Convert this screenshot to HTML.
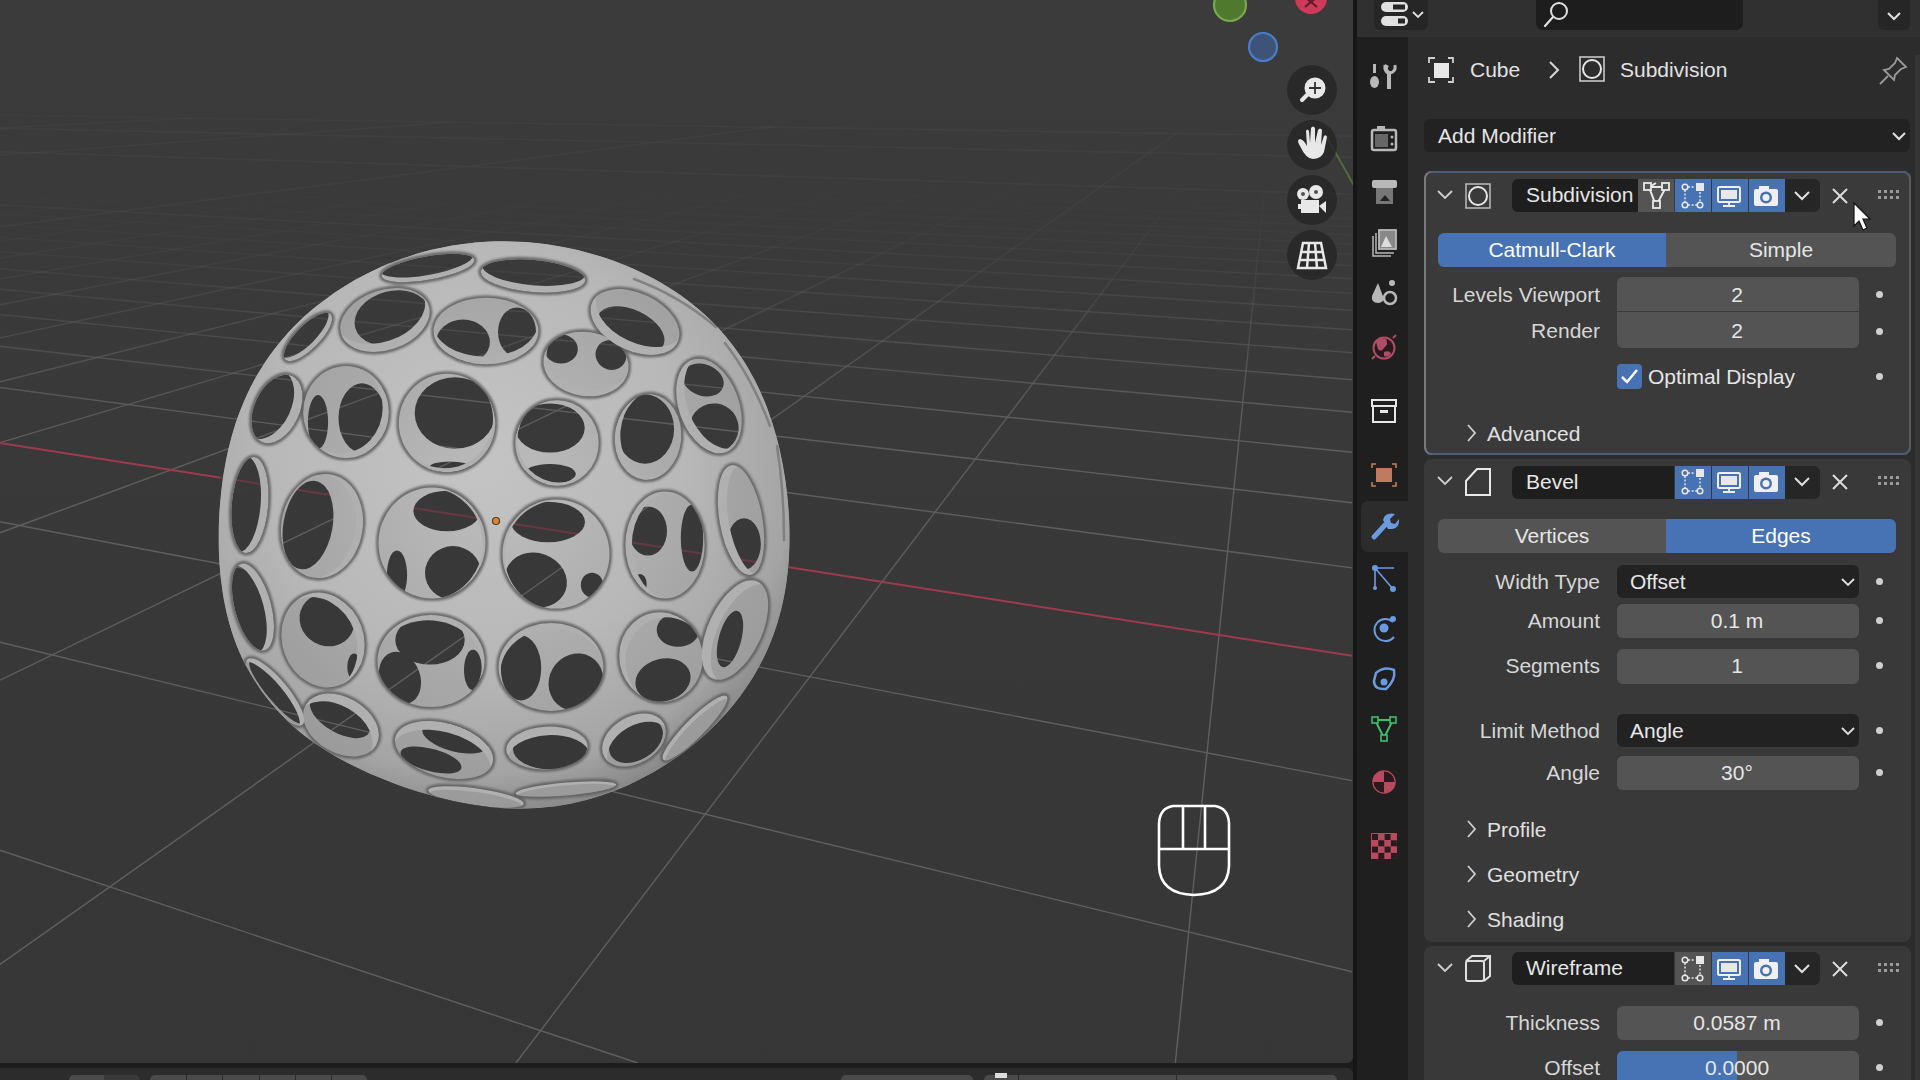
<!DOCTYPE html>
<html><head><meta charset="utf-8"><style>
html,body{margin:0;padding:0;width:1920px;height:1080px;overflow:hidden;background:#1d1d1d}
.t{position:absolute;font-family:"Liberation Sans",sans-serif;white-space:nowrap}
</style></head><body>
<div style="position:absolute;left:0px;top:0px;width:1353px;height:1063px;background:linear-gradient(#3b3b3b,#383838 60%,#363636);border-bottom-right-radius:6px;overflow:hidden"></div>
<svg width="1353" height="1063" viewBox="0 0 1353 1063" style="position:absolute;left:0;top:0">
<defs><linearGradient id="fade" x1="0" y1="0" x2="0" y2="1"><stop offset="0" stop-color="#000"/><stop offset="0.13" stop-color="#000"/><stop offset="0.3" stop-color="#333"/><stop offset="0.5" stop-color="#999"/><stop offset="0.8" stop-color="#fff"/></linearGradient>
<mask id="gfade" maskUnits="userSpaceOnUse" x="0" y="0" width="1353" height="1063"><rect width="1353" height="1063" fill="url(#fade)"/></mask></defs>
<defs><linearGradient id="g0" gradientUnits="userSpaceOnUse" x1="0.0" y1="115.1" x2="1352.0" y2="136.3"><stop offset="0" stop-color="#5e5e5e" stop-opacity="0.08"/><stop offset="0.03" stop-color="#5e5e5e" stop-opacity="0.08"/><stop offset="0.08" stop-color="#5e5e5e" stop-opacity="0.09"/><stop offset="0.15" stop-color="#5e5e5e" stop-opacity="0.10"/><stop offset="0.3" stop-color="#5e5e5e" stop-opacity="0.12"/><stop offset="0.5" stop-color="#5e5e5e" stop-opacity="0.14"/><stop offset="0.75" stop-color="#5e5e5e" stop-opacity="0.15"/><stop offset="1.0" stop-color="#5e5e5e" stop-opacity="0.15"/></linearGradient><linearGradient id="g1" gradientUnits="userSpaceOnUse" x1="0.0" y1="116.2" x2="1352.0" y2="138.0"><stop offset="0" stop-color="#5e5e5e" stop-opacity="0.00"/><stop offset="0.03" stop-color="#5e5e5e" stop-opacity="0.00"/><stop offset="0.08" stop-color="#5e5e5e" stop-opacity="0.00"/><stop offset="0.15" stop-color="#5e5e5e" stop-opacity="0.00"/><stop offset="0.3" stop-color="#5e5e5e" stop-opacity="0.00"/><stop offset="0.5" stop-color="#5e5e5e" stop-opacity="0.00"/><stop offset="0.75" stop-color="#5e5e5e" stop-opacity="0.00"/><stop offset="1.0" stop-color="#5e5e5e" stop-opacity="0.00"/></linearGradient><linearGradient id="g2" gradientUnits="userSpaceOnUse" x1="15.2" y1="115.3" x2="0.0" y2="115.9"><stop offset="0" stop-color="#5e5e5e" stop-opacity="0.00"/><stop offset="0.03" stop-color="#5e5e5e" stop-opacity="0.00"/><stop offset="0.08" stop-color="#5e5e5e" stop-opacity="0.00"/><stop offset="0.15" stop-color="#5e5e5e" stop-opacity="0.00"/><stop offset="0.3" stop-color="#5e5e5e" stop-opacity="0.00"/><stop offset="0.5" stop-color="#5e5e5e" stop-opacity="0.00"/><stop offset="0.75" stop-color="#5e5e5e" stop-opacity="0.00"/><stop offset="1.0" stop-color="#5e5e5e" stop-opacity="0.00"/></linearGradient><linearGradient id="g3" gradientUnits="userSpaceOnUse" x1="0.0" y1="117.2" x2="1352.0" y2="139.7"><stop offset="0" stop-color="#5e5e5e" stop-opacity="0.00"/><stop offset="0.03" stop-color="#5e5e5e" stop-opacity="0.00"/><stop offset="0.08" stop-color="#5e5e5e" stop-opacity="0.00"/><stop offset="0.15" stop-color="#5e5e5e" stop-opacity="0.00"/><stop offset="0.3" stop-color="#5e5e5e" stop-opacity="0.00"/><stop offset="0.5" stop-color="#5e5e5e" stop-opacity="0.00"/><stop offset="0.75" stop-color="#5e5e5e" stop-opacity="0.00"/><stop offset="1.0" stop-color="#5e5e5e" stop-opacity="0.00"/></linearGradient><linearGradient id="g4" gradientUnits="userSpaceOnUse" x1="35.8" y1="115.7" x2="0.0" y2="117.3"><stop offset="0" stop-color="#5e5e5e" stop-opacity="0.00"/><stop offset="0.03" stop-color="#5e5e5e" stop-opacity="0.00"/><stop offset="0.08" stop-color="#5e5e5e" stop-opacity="0.00"/><stop offset="0.15" stop-color="#5e5e5e" stop-opacity="0.00"/><stop offset="0.3" stop-color="#5e5e5e" stop-opacity="0.00"/><stop offset="0.5" stop-color="#5e5e5e" stop-opacity="0.00"/><stop offset="0.75" stop-color="#5e5e5e" stop-opacity="0.00"/><stop offset="1.0" stop-color="#5e5e5e" stop-opacity="0.00"/></linearGradient><linearGradient id="g5" gradientUnits="userSpaceOnUse" x1="0.0" y1="118.4" x2="1352.0" y2="141.5"><stop offset="0" stop-color="#5e5e5e" stop-opacity="0.00"/><stop offset="0.03" stop-color="#5e5e5e" stop-opacity="0.00"/><stop offset="0.08" stop-color="#5e5e5e" stop-opacity="0.00"/><stop offset="0.15" stop-color="#5e5e5e" stop-opacity="0.00"/><stop offset="0.3" stop-color="#5e5e5e" stop-opacity="0.00"/><stop offset="0.5" stop-color="#5e5e5e" stop-opacity="0.00"/><stop offset="0.75" stop-color="#5e5e5e" stop-opacity="0.00"/><stop offset="1.0" stop-color="#5e5e5e" stop-opacity="0.00"/></linearGradient><linearGradient id="g6" gradientUnits="userSpaceOnUse" x1="56.7" y1="116.0" x2="0.0" y2="118.5"><stop offset="0" stop-color="#5e5e5e" stop-opacity="0.00"/><stop offset="0.03" stop-color="#5e5e5e" stop-opacity="0.00"/><stop offset="0.08" stop-color="#5e5e5e" stop-opacity="0.00"/><stop offset="0.15" stop-color="#5e5e5e" stop-opacity="0.00"/><stop offset="0.3" stop-color="#5e5e5e" stop-opacity="0.00"/><stop offset="0.5" stop-color="#5e5e5e" stop-opacity="0.00"/><stop offset="0.75" stop-color="#5e5e5e" stop-opacity="0.00"/><stop offset="1.0" stop-color="#5e5e5e" stop-opacity="0.00"/></linearGradient><linearGradient id="g7" gradientUnits="userSpaceOnUse" x1="0.0" y1="119.6" x2="1352.0" y2="143.4"><stop offset="0" stop-color="#5e5e5e" stop-opacity="0.00"/><stop offset="0.03" stop-color="#5e5e5e" stop-opacity="0.00"/><stop offset="0.08" stop-color="#5e5e5e" stop-opacity="0.00"/><stop offset="0.15" stop-color="#5e5e5e" stop-opacity="0.00"/><stop offset="0.3" stop-color="#5e5e5e" stop-opacity="0.00"/><stop offset="0.5" stop-color="#5e5e5e" stop-opacity="0.00"/><stop offset="0.75" stop-color="#5e5e5e" stop-opacity="0.00"/><stop offset="1.0" stop-color="#5e5e5e" stop-opacity="0.00"/></linearGradient><linearGradient id="g8" gradientUnits="userSpaceOnUse" x1="78.0" y1="116.3" x2="0.0" y2="119.8"><stop offset="0" stop-color="#5e5e5e" stop-opacity="0.00"/><stop offset="0.03" stop-color="#5e5e5e" stop-opacity="0.00"/><stop offset="0.08" stop-color="#5e5e5e" stop-opacity="0.00"/><stop offset="0.15" stop-color="#5e5e5e" stop-opacity="0.00"/><stop offset="0.3" stop-color="#5e5e5e" stop-opacity="0.00"/><stop offset="0.5" stop-color="#5e5e5e" stop-opacity="0.00"/><stop offset="0.75" stop-color="#5e5e5e" stop-opacity="0.00"/><stop offset="1.0" stop-color="#5e5e5e" stop-opacity="0.00"/></linearGradient><linearGradient id="g9" gradientUnits="userSpaceOnUse" x1="0.0" y1="120.9" x2="1352.0" y2="145.5"><stop offset="0" stop-color="#5e5e5e" stop-opacity="0.00"/><stop offset="0.03" stop-color="#5e5e5e" stop-opacity="0.00"/><stop offset="0.08" stop-color="#5e5e5e" stop-opacity="0.00"/><stop offset="0.15" stop-color="#5e5e5e" stop-opacity="0.00"/><stop offset="0.3" stop-color="#5e5e5e" stop-opacity="0.00"/><stop offset="0.5" stop-color="#5e5e5e" stop-opacity="0.00"/><stop offset="0.75" stop-color="#5e5e5e" stop-opacity="0.00"/><stop offset="1.0" stop-color="#5e5e5e" stop-opacity="0.00"/></linearGradient><linearGradient id="g10" gradientUnits="userSpaceOnUse" x1="99.7" y1="116.7" x2="0.0" y2="121.3"><stop offset="0" stop-color="#5e5e5e" stop-opacity="0.00"/><stop offset="0.03" stop-color="#5e5e5e" stop-opacity="0.00"/><stop offset="0.08" stop-color="#5e5e5e" stop-opacity="0.00"/><stop offset="0.15" stop-color="#5e5e5e" stop-opacity="0.00"/><stop offset="0.3" stop-color="#5e5e5e" stop-opacity="0.00"/><stop offset="0.5" stop-color="#5e5e5e" stop-opacity="0.00"/><stop offset="0.75" stop-color="#5e5e5e" stop-opacity="0.00"/><stop offset="1.0" stop-color="#5e5e5e" stop-opacity="0.00"/></linearGradient><linearGradient id="g11" gradientUnits="userSpaceOnUse" x1="0.0" y1="122.2" x2="1352.0" y2="147.5"><stop offset="0" stop-color="#5e5e5e" stop-opacity="0.00"/><stop offset="0.03" stop-color="#5e5e5e" stop-opacity="0.00"/><stop offset="0.08" stop-color="#5e5e5e" stop-opacity="0.00"/><stop offset="0.15" stop-color="#5e5e5e" stop-opacity="0.00"/><stop offset="0.3" stop-color="#5e5e5e" stop-opacity="0.00"/><stop offset="0.5" stop-color="#5e5e5e" stop-opacity="0.00"/><stop offset="0.75" stop-color="#5e5e5e" stop-opacity="0.00"/><stop offset="1.0" stop-color="#5e5e5e" stop-opacity="0.00"/></linearGradient><linearGradient id="g12" gradientUnits="userSpaceOnUse" x1="121.8" y1="117.0" x2="0.0" y2="122.8"><stop offset="0" stop-color="#5e5e5e" stop-opacity="0.00"/><stop offset="0.03" stop-color="#5e5e5e" stop-opacity="0.00"/><stop offset="0.08" stop-color="#5e5e5e" stop-opacity="0.00"/><stop offset="0.15" stop-color="#5e5e5e" stop-opacity="0.00"/><stop offset="0.3" stop-color="#5e5e5e" stop-opacity="0.00"/><stop offset="0.5" stop-color="#5e5e5e" stop-opacity="0.00"/><stop offset="0.75" stop-color="#5e5e5e" stop-opacity="0.00"/><stop offset="1.0" stop-color="#5e5e5e" stop-opacity="0.00"/></linearGradient><linearGradient id="g13" gradientUnits="userSpaceOnUse" x1="0.0" y1="123.6" x2="1352.0" y2="149.8"><stop offset="0" stop-color="#5e5e5e" stop-opacity="0.00"/><stop offset="0.03" stop-color="#5e5e5e" stop-opacity="0.00"/><stop offset="0.08" stop-color="#5e5e5e" stop-opacity="0.00"/><stop offset="0.15" stop-color="#5e5e5e" stop-opacity="0.00"/><stop offset="0.3" stop-color="#5e5e5e" stop-opacity="0.00"/><stop offset="0.5" stop-color="#5e5e5e" stop-opacity="0.00"/><stop offset="0.75" stop-color="#5e5e5e" stop-opacity="0.00"/><stop offset="1.0" stop-color="#5e5e5e" stop-opacity="0.00"/></linearGradient><linearGradient id="g14" gradientUnits="userSpaceOnUse" x1="144.3" y1="117.4" x2="0.0" y2="124.5"><stop offset="0" stop-color="#5e5e5e" stop-opacity="0.00"/><stop offset="0.03" stop-color="#5e5e5e" stop-opacity="0.00"/><stop offset="0.08" stop-color="#5e5e5e" stop-opacity="0.00"/><stop offset="0.15" stop-color="#5e5e5e" stop-opacity="0.00"/><stop offset="0.3" stop-color="#5e5e5e" stop-opacity="0.00"/><stop offset="0.5" stop-color="#5e5e5e" stop-opacity="0.00"/><stop offset="0.75" stop-color="#5e5e5e" stop-opacity="0.00"/><stop offset="1.0" stop-color="#5e5e5e" stop-opacity="0.00"/></linearGradient><linearGradient id="g15" gradientUnits="userSpaceOnUse" x1="0.0" y1="125.1" x2="1352.0" y2="152.1"><stop offset="0" stop-color="#5e5e5e" stop-opacity="0.00"/><stop offset="0.03" stop-color="#5e5e5e" stop-opacity="0.00"/><stop offset="0.08" stop-color="#5e5e5e" stop-opacity="0.00"/><stop offset="0.15" stop-color="#5e5e5e" stop-opacity="0.00"/><stop offset="0.3" stop-color="#5e5e5e" stop-opacity="0.00"/><stop offset="0.5" stop-color="#5e5e5e" stop-opacity="0.00"/><stop offset="0.75" stop-color="#5e5e5e" stop-opacity="0.00"/><stop offset="1.0" stop-color="#5e5e5e" stop-opacity="0.00"/></linearGradient><linearGradient id="g16" gradientUnits="userSpaceOnUse" x1="167.2" y1="117.7" x2="0.0" y2="126.1"><stop offset="0" stop-color="#5e5e5e" stop-opacity="0.00"/><stop offset="0.03" stop-color="#5e5e5e" stop-opacity="0.00"/><stop offset="0.08" stop-color="#5e5e5e" stop-opacity="0.00"/><stop offset="0.15" stop-color="#5e5e5e" stop-opacity="0.00"/><stop offset="0.3" stop-color="#5e5e5e" stop-opacity="0.00"/><stop offset="0.5" stop-color="#5e5e5e" stop-opacity="0.00"/><stop offset="0.75" stop-color="#5e5e5e" stop-opacity="0.00"/><stop offset="1.0" stop-color="#5e5e5e" stop-opacity="0.00"/></linearGradient><linearGradient id="g17" gradientUnits="userSpaceOnUse" x1="0.0" y1="126.7" x2="1352.0" y2="154.6"><stop offset="0" stop-color="#5e5e5e" stop-opacity="0.00"/><stop offset="0.03" stop-color="#5e5e5e" stop-opacity="0.00"/><stop offset="0.08" stop-color="#5e5e5e" stop-opacity="0.00"/><stop offset="0.15" stop-color="#5e5e5e" stop-opacity="0.00"/><stop offset="0.3" stop-color="#5e5e5e" stop-opacity="0.00"/><stop offset="0.5" stop-color="#5e5e5e" stop-opacity="0.00"/><stop offset="0.75" stop-color="#5e5e5e" stop-opacity="0.00"/><stop offset="1.0" stop-color="#5e5e5e" stop-opacity="0.00"/></linearGradient><linearGradient id="g18" gradientUnits="userSpaceOnUse" x1="190.6" y1="118.1" x2="0.0" y2="128.0"><stop offset="0" stop-color="#5e5e5e" stop-opacity="0.10"/><stop offset="0.03" stop-color="#5e5e5e" stop-opacity="0.10"/><stop offset="0.08" stop-color="#5e5e5e" stop-opacity="0.10"/><stop offset="0.15" stop-color="#5e5e5e" stop-opacity="0.10"/><stop offset="0.3" stop-color="#5e5e5e" stop-opacity="0.11"/><stop offset="0.5" stop-color="#5e5e5e" stop-opacity="0.12"/><stop offset="0.75" stop-color="#5e5e5e" stop-opacity="0.13"/><stop offset="1.0" stop-color="#5e5e5e" stop-opacity="0.14"/></linearGradient><linearGradient id="g19" gradientUnits="userSpaceOnUse" x1="0.0" y1="128.3" x2="1352.0" y2="157.2"><stop offset="0" stop-color="#5e5e5e" stop-opacity="0.14"/><stop offset="0.03" stop-color="#5e5e5e" stop-opacity="0.14"/><stop offset="0.08" stop-color="#5e5e5e" stop-opacity="0.14"/><stop offset="0.15" stop-color="#5e5e5e" stop-opacity="0.15"/><stop offset="0.3" stop-color="#5e5e5e" stop-opacity="0.15"/><stop offset="0.5" stop-color="#5e5e5e" stop-opacity="0.15"/><stop offset="0.75" stop-color="#5e5e5e" stop-opacity="0.15"/><stop offset="1.0" stop-color="#5e5e5e" stop-opacity="0.15"/></linearGradient><linearGradient id="g20" gradientUnits="userSpaceOnUse" x1="214.4" y1="118.5" x2="0.0" y2="129.9"><stop offset="0" stop-color="#5e5e5e" stop-opacity="0.00"/><stop offset="0.03" stop-color="#5e5e5e" stop-opacity="0.00"/><stop offset="0.08" stop-color="#5e5e5e" stop-opacity="0.00"/><stop offset="0.15" stop-color="#5e5e5e" stop-opacity="0.00"/><stop offset="0.3" stop-color="#5e5e5e" stop-opacity="0.00"/><stop offset="0.5" stop-color="#5e5e5e" stop-opacity="0.00"/><stop offset="0.75" stop-color="#5e5e5e" stop-opacity="0.00"/><stop offset="1.0" stop-color="#5e5e5e" stop-opacity="0.00"/></linearGradient><linearGradient id="g21" gradientUnits="userSpaceOnUse" x1="0.0" y1="130.1" x2="1352.0" y2="160.0"><stop offset="0" stop-color="#5e5e5e" stop-opacity="0.00"/><stop offset="0.03" stop-color="#5e5e5e" stop-opacity="0.00"/><stop offset="0.08" stop-color="#5e5e5e" stop-opacity="0.00"/><stop offset="0.15" stop-color="#5e5e5e" stop-opacity="0.00"/><stop offset="0.3" stop-color="#5e5e5e" stop-opacity="0.00"/><stop offset="0.5" stop-color="#5e5e5e" stop-opacity="0.00"/><stop offset="0.75" stop-color="#5e5e5e" stop-opacity="0.00"/><stop offset="1.0" stop-color="#5e5e5e" stop-opacity="0.00"/></linearGradient><linearGradient id="g22" gradientUnits="userSpaceOnUse" x1="238.6" y1="118.8" x2="0.0" y2="131.9"><stop offset="0" stop-color="#5e5e5e" stop-opacity="0.00"/><stop offset="0.03" stop-color="#5e5e5e" stop-opacity="0.00"/><stop offset="0.08" stop-color="#5e5e5e" stop-opacity="0.00"/><stop offset="0.15" stop-color="#5e5e5e" stop-opacity="0.00"/><stop offset="0.3" stop-color="#5e5e5e" stop-opacity="0.00"/><stop offset="0.5" stop-color="#5e5e5e" stop-opacity="0.00"/><stop offset="0.75" stop-color="#5e5e5e" stop-opacity="0.00"/><stop offset="1.0" stop-color="#5e5e5e" stop-opacity="0.00"/></linearGradient><linearGradient id="g23" gradientUnits="userSpaceOnUse" x1="0.0" y1="131.9" x2="1352.0" y2="162.9"><stop offset="0" stop-color="#5e5e5e" stop-opacity="0.00"/><stop offset="0.03" stop-color="#5e5e5e" stop-opacity="0.00"/><stop offset="0.08" stop-color="#5e5e5e" stop-opacity="0.00"/><stop offset="0.15" stop-color="#5e5e5e" stop-opacity="0.00"/><stop offset="0.3" stop-color="#5e5e5e" stop-opacity="0.00"/><stop offset="0.5" stop-color="#5e5e5e" stop-opacity="0.00"/><stop offset="0.75" stop-color="#5e5e5e" stop-opacity="0.00"/><stop offset="1.0" stop-color="#5e5e5e" stop-opacity="0.00"/></linearGradient><linearGradient id="g24" gradientUnits="userSpaceOnUse" x1="263.3" y1="119.2" x2="0.0" y2="134.1"><stop offset="0" stop-color="#5e5e5e" stop-opacity="0.00"/><stop offset="0.03" stop-color="#5e5e5e" stop-opacity="0.00"/><stop offset="0.08" stop-color="#5e5e5e" stop-opacity="0.00"/><stop offset="0.15" stop-color="#5e5e5e" stop-opacity="0.00"/><stop offset="0.3" stop-color="#5e5e5e" stop-opacity="0.00"/><stop offset="0.5" stop-color="#5e5e5e" stop-opacity="0.00"/><stop offset="0.75" stop-color="#5e5e5e" stop-opacity="0.00"/><stop offset="1.0" stop-color="#5e5e5e" stop-opacity="0.00"/></linearGradient><linearGradient id="g25" gradientUnits="userSpaceOnUse" x1="0.0" y1="133.8" x2="1352.0" y2="166.0"><stop offset="0" stop-color="#5e5e5e" stop-opacity="0.00"/><stop offset="0.03" stop-color="#5e5e5e" stop-opacity="0.00"/><stop offset="0.08" stop-color="#5e5e5e" stop-opacity="0.00"/><stop offset="0.15" stop-color="#5e5e5e" stop-opacity="0.00"/><stop offset="0.3" stop-color="#5e5e5e" stop-opacity="0.00"/><stop offset="0.5" stop-color="#5e5e5e" stop-opacity="0.00"/><stop offset="0.75" stop-color="#5e5e5e" stop-opacity="0.00"/><stop offset="1.0" stop-color="#5e5e5e" stop-opacity="0.00"/></linearGradient><linearGradient id="g26" gradientUnits="userSpaceOnUse" x1="288.5" y1="119.6" x2="0.0" y2="136.5"><stop offset="0" stop-color="#5e5e5e" stop-opacity="0.00"/><stop offset="0.03" stop-color="#5e5e5e" stop-opacity="0.00"/><stop offset="0.08" stop-color="#5e5e5e" stop-opacity="0.00"/><stop offset="0.15" stop-color="#5e5e5e" stop-opacity="0.00"/><stop offset="0.3" stop-color="#5e5e5e" stop-opacity="0.00"/><stop offset="0.5" stop-color="#5e5e5e" stop-opacity="0.00"/><stop offset="0.75" stop-color="#5e5e5e" stop-opacity="0.00"/><stop offset="1.0" stop-color="#5e5e5e" stop-opacity="0.00"/></linearGradient><linearGradient id="g27" gradientUnits="userSpaceOnUse" x1="0.0" y1="135.9" x2="1352.0" y2="169.2"><stop offset="0" stop-color="#5e5e5e" stop-opacity="0.00"/><stop offset="0.03" stop-color="#5e5e5e" stop-opacity="0.00"/><stop offset="0.08" stop-color="#5e5e5e" stop-opacity="0.00"/><stop offset="0.15" stop-color="#5e5e5e" stop-opacity="0.00"/><stop offset="0.3" stop-color="#5e5e5e" stop-opacity="0.00"/><stop offset="0.5" stop-color="#5e5e5e" stop-opacity="0.00"/><stop offset="0.75" stop-color="#5e5e5e" stop-opacity="0.00"/><stop offset="1.0" stop-color="#5e5e5e" stop-opacity="0.00"/></linearGradient><linearGradient id="g28" gradientUnits="userSpaceOnUse" x1="314.2" y1="120.0" x2="0.0" y2="139.0"><stop offset="0" stop-color="#5e5e5e" stop-opacity="0.00"/><stop offset="0.03" stop-color="#5e5e5e" stop-opacity="0.00"/><stop offset="0.08" stop-color="#5e5e5e" stop-opacity="0.00"/><stop offset="0.15" stop-color="#5e5e5e" stop-opacity="0.00"/><stop offset="0.3" stop-color="#5e5e5e" stop-opacity="0.00"/><stop offset="0.5" stop-color="#5e5e5e" stop-opacity="0.00"/><stop offset="0.75" stop-color="#5e5e5e" stop-opacity="0.00"/><stop offset="1.0" stop-color="#5e5e5e" stop-opacity="0.00"/></linearGradient><linearGradient id="g29" gradientUnits="userSpaceOnUse" x1="0.0" y1="138.1" x2="1352.0" y2="172.8"><stop offset="0" stop-color="#5e5e5e" stop-opacity="0.00"/><stop offset="0.03" stop-color="#5e5e5e" stop-opacity="0.00"/><stop offset="0.08" stop-color="#5e5e5e" stop-opacity="0.00"/><stop offset="0.15" stop-color="#5e5e5e" stop-opacity="0.00"/><stop offset="0.3" stop-color="#5e5e5e" stop-opacity="0.00"/><stop offset="0.5" stop-color="#5e5e5e" stop-opacity="0.00"/><stop offset="0.75" stop-color="#5e5e5e" stop-opacity="0.00"/><stop offset="1.0" stop-color="#5e5e5e" stop-opacity="0.01"/></linearGradient><linearGradient id="g30" gradientUnits="userSpaceOnUse" x1="340.5" y1="120.4" x2="0.0" y2="141.7"><stop offset="0" stop-color="#5e5e5e" stop-opacity="0.00"/><stop offset="0.03" stop-color="#5e5e5e" stop-opacity="0.00"/><stop offset="0.08" stop-color="#5e5e5e" stop-opacity="0.00"/><stop offset="0.15" stop-color="#5e5e5e" stop-opacity="0.00"/><stop offset="0.3" stop-color="#5e5e5e" stop-opacity="0.00"/><stop offset="0.5" stop-color="#5e5e5e" stop-opacity="0.00"/><stop offset="0.75" stop-color="#5e5e5e" stop-opacity="0.00"/><stop offset="1.0" stop-color="#5e5e5e" stop-opacity="0.00"/></linearGradient><linearGradient id="g31" gradientUnits="userSpaceOnUse" x1="0.0" y1="140.5" x2="1352.0" y2="176.5"><stop offset="0" stop-color="#5e5e5e" stop-opacity="0.00"/><stop offset="0.03" stop-color="#5e5e5e" stop-opacity="0.00"/><stop offset="0.08" stop-color="#5e5e5e" stop-opacity="0.00"/><stop offset="0.15" stop-color="#5e5e5e" stop-opacity="0.00"/><stop offset="0.3" stop-color="#5e5e5e" stop-opacity="0.00"/><stop offset="0.5" stop-color="#5e5e5e" stop-opacity="0.00"/><stop offset="0.75" stop-color="#5e5e5e" stop-opacity="0.00"/><stop offset="1.0" stop-color="#5e5e5e" stop-opacity="0.01"/></linearGradient><linearGradient id="g32" gradientUnits="userSpaceOnUse" x1="367.2" y1="120.9" x2="0.0" y2="144.7"><stop offset="0" stop-color="#5e5e5e" stop-opacity="0.00"/><stop offset="0.03" stop-color="#5e5e5e" stop-opacity="0.00"/><stop offset="0.08" stop-color="#5e5e5e" stop-opacity="0.00"/><stop offset="0.15" stop-color="#5e5e5e" stop-opacity="0.00"/><stop offset="0.3" stop-color="#5e5e5e" stop-opacity="0.00"/><stop offset="0.5" stop-color="#5e5e5e" stop-opacity="0.00"/><stop offset="0.75" stop-color="#5e5e5e" stop-opacity="0.00"/><stop offset="1.0" stop-color="#5e5e5e" stop-opacity="0.00"/></linearGradient><linearGradient id="g33" gradientUnits="userSpaceOnUse" x1="0.0" y1="143.0" x2="1352.0" y2="180.5"><stop offset="0" stop-color="#5e5e5e" stop-opacity="0.00"/><stop offset="0.03" stop-color="#5e5e5e" stop-opacity="0.00"/><stop offset="0.08" stop-color="#5e5e5e" stop-opacity="0.00"/><stop offset="0.15" stop-color="#5e5e5e" stop-opacity="0.00"/><stop offset="0.3" stop-color="#5e5e5e" stop-opacity="0.00"/><stop offset="0.5" stop-color="#5e5e5e" stop-opacity="0.00"/><stop offset="0.75" stop-color="#5e5e5e" stop-opacity="0.00"/><stop offset="1.0" stop-color="#5e5e5e" stop-opacity="0.01"/></linearGradient><linearGradient id="g34" gradientUnits="userSpaceOnUse" x1="394.5" y1="121.3" x2="0.0" y2="147.9"><stop offset="0" stop-color="#5e5e5e" stop-opacity="0.00"/><stop offset="0.03" stop-color="#5e5e5e" stop-opacity="0.00"/><stop offset="0.08" stop-color="#5e5e5e" stop-opacity="0.00"/><stop offset="0.15" stop-color="#5e5e5e" stop-opacity="0.00"/><stop offset="0.3" stop-color="#5e5e5e" stop-opacity="0.00"/><stop offset="0.5" stop-color="#5e5e5e" stop-opacity="0.00"/><stop offset="0.75" stop-color="#5e5e5e" stop-opacity="0.00"/><stop offset="1.0" stop-color="#5e5e5e" stop-opacity="0.00"/></linearGradient><linearGradient id="g35" gradientUnits="userSpaceOnUse" x1="0.0" y1="145.7" x2="1352.0" y2="184.8"><stop offset="0" stop-color="#5e5e5e" stop-opacity="0.00"/><stop offset="0.03" stop-color="#5e5e5e" stop-opacity="0.00"/><stop offset="0.08" stop-color="#5e5e5e" stop-opacity="0.00"/><stop offset="0.15" stop-color="#5e5e5e" stop-opacity="0.00"/><stop offset="0.3" stop-color="#5e5e5e" stop-opacity="0.00"/><stop offset="0.5" stop-color="#5e5e5e" stop-opacity="0.00"/><stop offset="0.75" stop-color="#5e5e5e" stop-opacity="0.01"/><stop offset="1.0" stop-color="#5e5e5e" stop-opacity="0.01"/></linearGradient><linearGradient id="g36" gradientUnits="userSpaceOnUse" x1="422.3" y1="121.7" x2="0.0" y2="151.3"><stop offset="0" stop-color="#5e5e5e" stop-opacity="0.00"/><stop offset="0.03" stop-color="#5e5e5e" stop-opacity="0.00"/><stop offset="0.08" stop-color="#5e5e5e" stop-opacity="0.00"/><stop offset="0.15" stop-color="#5e5e5e" stop-opacity="0.00"/><stop offset="0.3" stop-color="#5e5e5e" stop-opacity="0.00"/><stop offset="0.5" stop-color="#5e5e5e" stop-opacity="0.00"/><stop offset="0.75" stop-color="#5e5e5e" stop-opacity="0.00"/><stop offset="1.0" stop-color="#5e5e5e" stop-opacity="0.00"/></linearGradient><linearGradient id="g37" gradientUnits="userSpaceOnUse" x1="0.0" y1="148.6" x2="1352.0" y2="189.4"><stop offset="0" stop-color="#5e5e5e" stop-opacity="0.00"/><stop offset="0.03" stop-color="#5e5e5e" stop-opacity="0.00"/><stop offset="0.08" stop-color="#5e5e5e" stop-opacity="0.00"/><stop offset="0.15" stop-color="#5e5e5e" stop-opacity="0.00"/><stop offset="0.3" stop-color="#5e5e5e" stop-opacity="0.00"/><stop offset="0.5" stop-color="#5e5e5e" stop-opacity="0.00"/><stop offset="0.75" stop-color="#5e5e5e" stop-opacity="0.01"/><stop offset="1.0" stop-color="#5e5e5e" stop-opacity="0.02"/></linearGradient><linearGradient id="g38" gradientUnits="userSpaceOnUse" x1="450.8" y1="122.2" x2="0.0" y2="155.1"><stop offset="0" stop-color="#5e5e5e" stop-opacity="0.12"/><stop offset="0.03" stop-color="#5e5e5e" stop-opacity="0.13"/><stop offset="0.08" stop-color="#5e5e5e" stop-opacity="0.13"/><stop offset="0.15" stop-color="#5e5e5e" stop-opacity="0.14"/><stop offset="0.3" stop-color="#5e5e5e" stop-opacity="0.15"/><stop offset="0.5" stop-color="#5e5e5e" stop-opacity="0.15"/><stop offset="0.75" stop-color="#5e5e5e" stop-opacity="0.15"/><stop offset="1.0" stop-color="#5e5e5e" stop-opacity="0.15"/></linearGradient><linearGradient id="g39" gradientUnits="userSpaceOnUse" x1="0.0" y1="151.7" x2="1352.0" y2="194.3"><stop offset="0" stop-color="#5e5e5e" stop-opacity="0.15"/><stop offset="0.03" stop-color="#5e5e5e" stop-opacity="0.15"/><stop offset="0.08" stop-color="#5e5e5e" stop-opacity="0.15"/><stop offset="0.15" stop-color="#5e5e5e" stop-opacity="0.15"/><stop offset="0.3" stop-color="#5e5e5e" stop-opacity="0.15"/><stop offset="0.5" stop-color="#5e5e5e" stop-opacity="0.15"/><stop offset="0.75" stop-color="#5e5e5e" stop-opacity="0.15"/><stop offset="1.0" stop-color="#5e5e5e" stop-opacity="0.15"/></linearGradient><linearGradient id="g40" gradientUnits="userSpaceOnUse" x1="479.8" y1="122.6" x2="0.0" y2="159.2"><stop offset="0" stop-color="#5e5e5e" stop-opacity="0.00"/><stop offset="0.03" stop-color="#5e5e5e" stop-opacity="0.00"/><stop offset="0.08" stop-color="#5e5e5e" stop-opacity="0.00"/><stop offset="0.15" stop-color="#5e5e5e" stop-opacity="0.00"/><stop offset="0.3" stop-color="#5e5e5e" stop-opacity="0.00"/><stop offset="0.5" stop-color="#5e5e5e" stop-opacity="0.00"/><stop offset="0.75" stop-color="#5e5e5e" stop-opacity="0.00"/><stop offset="1.0" stop-color="#5e5e5e" stop-opacity="0.00"/></linearGradient><linearGradient id="g41" gradientUnits="userSpaceOnUse" x1="0.0" y1="155.2" x2="1352.0" y2="199.8"><stop offset="0" stop-color="#5e5e5e" stop-opacity="0.00"/><stop offset="0.03" stop-color="#5e5e5e" stop-opacity="0.00"/><stop offset="0.08" stop-color="#5e5e5e" stop-opacity="0.00"/><stop offset="0.15" stop-color="#5e5e5e" stop-opacity="0.00"/><stop offset="0.3" stop-color="#5e5e5e" stop-opacity="0.00"/><stop offset="0.5" stop-color="#5e5e5e" stop-opacity="0.01"/><stop offset="0.75" stop-color="#5e5e5e" stop-opacity="0.02"/><stop offset="1.0" stop-color="#5e5e5e" stop-opacity="0.03"/></linearGradient><linearGradient id="g42" gradientUnits="userSpaceOnUse" x1="509.4" y1="123.1" x2="-0.0" y2="163.7"><stop offset="0" stop-color="#5e5e5e" stop-opacity="0.00"/><stop offset="0.03" stop-color="#5e5e5e" stop-opacity="0.00"/><stop offset="0.08" stop-color="#5e5e5e" stop-opacity="0.00"/><stop offset="0.15" stop-color="#5e5e5e" stop-opacity="0.00"/><stop offset="0.3" stop-color="#5e5e5e" stop-opacity="0.00"/><stop offset="0.5" stop-color="#5e5e5e" stop-opacity="0.00"/><stop offset="0.75" stop-color="#5e5e5e" stop-opacity="0.00"/><stop offset="1.0" stop-color="#5e5e5e" stop-opacity="0.00"/></linearGradient><linearGradient id="g43" gradientUnits="userSpaceOnUse" x1="0.0" y1="158.8" x2="1352.0" y2="205.6"><stop offset="0" stop-color="#5e5e5e" stop-opacity="0.00"/><stop offset="0.03" stop-color="#5e5e5e" stop-opacity="0.00"/><stop offset="0.08" stop-color="#5e5e5e" stop-opacity="0.00"/><stop offset="0.15" stop-color="#5e5e5e" stop-opacity="0.00"/><stop offset="0.3" stop-color="#5e5e5e" stop-opacity="0.00"/><stop offset="0.5" stop-color="#5e5e5e" stop-opacity="0.01"/><stop offset="0.75" stop-color="#5e5e5e" stop-opacity="0.02"/><stop offset="1.0" stop-color="#5e5e5e" stop-opacity="0.04"/></linearGradient><linearGradient id="g44" gradientUnits="userSpaceOnUse" x1="539.7" y1="123.6" x2="0.0" y2="168.8"><stop offset="0" stop-color="#5e5e5e" stop-opacity="0.00"/><stop offset="0.03" stop-color="#5e5e5e" stop-opacity="0.00"/><stop offset="0.08" stop-color="#5e5e5e" stop-opacity="0.00"/><stop offset="0.15" stop-color="#5e5e5e" stop-opacity="0.00"/><stop offset="0.3" stop-color="#5e5e5e" stop-opacity="0.00"/><stop offset="0.5" stop-color="#5e5e5e" stop-opacity="0.00"/><stop offset="0.75" stop-color="#5e5e5e" stop-opacity="0.00"/><stop offset="1.0" stop-color="#5e5e5e" stop-opacity="0.00"/></linearGradient><linearGradient id="g45" gradientUnits="userSpaceOnUse" x1="0.0" y1="162.8" x2="1352.0" y2="211.9"><stop offset="0" stop-color="#5e5e5e" stop-opacity="0.00"/><stop offset="0.03" stop-color="#5e5e5e" stop-opacity="0.00"/><stop offset="0.08" stop-color="#5e5e5e" stop-opacity="0.00"/><stop offset="0.15" stop-color="#5e5e5e" stop-opacity="0.00"/><stop offset="0.3" stop-color="#5e5e5e" stop-opacity="0.01"/><stop offset="0.5" stop-color="#5e5e5e" stop-opacity="0.01"/><stop offset="0.75" stop-color="#5e5e5e" stop-opacity="0.03"/><stop offset="1.0" stop-color="#5e5e5e" stop-opacity="0.05"/></linearGradient><linearGradient id="g46" gradientUnits="userSpaceOnUse" x1="570.6" y1="124.0" x2="0.0" y2="174.2"><stop offset="0" stop-color="#5e5e5e" stop-opacity="0.00"/><stop offset="0.03" stop-color="#5e5e5e" stop-opacity="0.00"/><stop offset="0.08" stop-color="#5e5e5e" stop-opacity="0.00"/><stop offset="0.15" stop-color="#5e5e5e" stop-opacity="0.00"/><stop offset="0.3" stop-color="#5e5e5e" stop-opacity="0.00"/><stop offset="0.5" stop-color="#5e5e5e" stop-opacity="0.00"/><stop offset="0.75" stop-color="#5e5e5e" stop-opacity="0.00"/><stop offset="1.0" stop-color="#5e5e5e" stop-opacity="0.00"/></linearGradient><linearGradient id="g47" gradientUnits="userSpaceOnUse" x1="0.0" y1="167.2" x2="1352.0" y2="218.8"><stop offset="0" stop-color="#5e5e5e" stop-opacity="0.00"/><stop offset="0.03" stop-color="#5e5e5e" stop-opacity="0.00"/><stop offset="0.08" stop-color="#5e5e5e" stop-opacity="0.00"/><stop offset="0.15" stop-color="#5e5e5e" stop-opacity="0.00"/><stop offset="0.3" stop-color="#5e5e5e" stop-opacity="0.01"/><stop offset="0.5" stop-color="#5e5e5e" stop-opacity="0.02"/><stop offset="0.75" stop-color="#5e5e5e" stop-opacity="0.04"/><stop offset="1.0" stop-color="#5e5e5e" stop-opacity="0.07"/></linearGradient><linearGradient id="g48" gradientUnits="userSpaceOnUse" x1="602.3" y1="124.5" x2="0.0" y2="180.5"><stop offset="0" stop-color="#5e5e5e" stop-opacity="0.00"/><stop offset="0.03" stop-color="#5e5e5e" stop-opacity="0.00"/><stop offset="0.08" stop-color="#5e5e5e" stop-opacity="0.00"/><stop offset="0.15" stop-color="#5e5e5e" stop-opacity="0.00"/><stop offset="0.3" stop-color="#5e5e5e" stop-opacity="0.00"/><stop offset="0.5" stop-color="#5e5e5e" stop-opacity="0.00"/><stop offset="0.75" stop-color="#5e5e5e" stop-opacity="0.00"/><stop offset="1.0" stop-color="#5e5e5e" stop-opacity="0.01"/></linearGradient><linearGradient id="g49" gradientUnits="userSpaceOnUse" x1="0.0" y1="172.0" x2="1352.0" y2="226.4"><stop offset="0" stop-color="#5e5e5e" stop-opacity="0.00"/><stop offset="0.03" stop-color="#5e5e5e" stop-opacity="0.00"/><stop offset="0.08" stop-color="#5e5e5e" stop-opacity="0.00"/><stop offset="0.15" stop-color="#5e5e5e" stop-opacity="0.01"/><stop offset="0.3" stop-color="#5e5e5e" stop-opacity="0.01"/><stop offset="0.5" stop-color="#5e5e5e" stop-opacity="0.03"/><stop offset="0.75" stop-color="#5e5e5e" stop-opacity="0.05"/><stop offset="1.0" stop-color="#5e5e5e" stop-opacity="0.08"/></linearGradient><linearGradient id="g50" gradientUnits="userSpaceOnUse" x1="634.6" y1="125.0" x2="0.0" y2="187.4"><stop offset="0" stop-color="#5e5e5e" stop-opacity="0.00"/><stop offset="0.03" stop-color="#5e5e5e" stop-opacity="0.00"/><stop offset="0.08" stop-color="#5e5e5e" stop-opacity="0.00"/><stop offset="0.15" stop-color="#5e5e5e" stop-opacity="0.00"/><stop offset="0.3" stop-color="#5e5e5e" stop-opacity="0.00"/><stop offset="0.5" stop-color="#5e5e5e" stop-opacity="0.00"/><stop offset="0.75" stop-color="#5e5e5e" stop-opacity="0.00"/><stop offset="1.0" stop-color="#5e5e5e" stop-opacity="0.01"/></linearGradient><linearGradient id="g51" gradientUnits="userSpaceOnUse" x1="0.0" y1="177.2" x2="1352.0" y2="234.7"><stop offset="0" stop-color="#5e5e5e" stop-opacity="0.01"/><stop offset="0.03" stop-color="#5e5e5e" stop-opacity="0.01"/><stop offset="0.08" stop-color="#5e5e5e" stop-opacity="0.01"/><stop offset="0.15" stop-color="#5e5e5e" stop-opacity="0.01"/><stop offset="0.3" stop-color="#5e5e5e" stop-opacity="0.02"/><stop offset="0.5" stop-color="#5e5e5e" stop-opacity="0.04"/><stop offset="0.75" stop-color="#5e5e5e" stop-opacity="0.06"/><stop offset="1.0" stop-color="#5e5e5e" stop-opacity="0.10"/></linearGradient><linearGradient id="g52" gradientUnits="userSpaceOnUse" x1="667.6" y1="125.6" x2="0.0" y2="195.4"><stop offset="0" stop-color="#5e5e5e" stop-opacity="0.00"/><stop offset="0.03" stop-color="#5e5e5e" stop-opacity="0.00"/><stop offset="0.08" stop-color="#5e5e5e" stop-opacity="0.00"/><stop offset="0.15" stop-color="#5e5e5e" stop-opacity="0.00"/><stop offset="0.3" stop-color="#5e5e5e" stop-opacity="0.00"/><stop offset="0.5" stop-color="#5e5e5e" stop-opacity="0.00"/><stop offset="0.75" stop-color="#5e5e5e" stop-opacity="0.01"/><stop offset="1.0" stop-color="#5e5e5e" stop-opacity="0.02"/></linearGradient><linearGradient id="g53" gradientUnits="userSpaceOnUse" x1="0.0" y1="183.1" x2="1352.0" y2="244.0"><stop offset="0" stop-color="#5e5e5e" stop-opacity="0.01"/><stop offset="0.03" stop-color="#5e5e5e" stop-opacity="0.01"/><stop offset="0.08" stop-color="#5e5e5e" stop-opacity="0.01"/><stop offset="0.15" stop-color="#5e5e5e" stop-opacity="0.02"/><stop offset="0.3" stop-color="#5e5e5e" stop-opacity="0.03"/><stop offset="0.5" stop-color="#5e5e5e" stop-opacity="0.05"/><stop offset="0.75" stop-color="#5e5e5e" stop-opacity="0.08"/><stop offset="1.0" stop-color="#5e5e5e" stop-opacity="0.13"/></linearGradient><linearGradient id="g54" gradientUnits="userSpaceOnUse" x1="701.4" y1="126.1" x2="0.0" y2="204.4"><stop offset="0" stop-color="#5e5e5e" stop-opacity="0.00"/><stop offset="0.03" stop-color="#5e5e5e" stop-opacity="0.00"/><stop offset="0.08" stop-color="#5e5e5e" stop-opacity="0.00"/><stop offset="0.15" stop-color="#5e5e5e" stop-opacity="0.00"/><stop offset="0.3" stop-color="#5e5e5e" stop-opacity="0.00"/><stop offset="0.5" stop-color="#5e5e5e" stop-opacity="0.00"/><stop offset="0.75" stop-color="#5e5e5e" stop-opacity="0.01"/><stop offset="1.0" stop-color="#5e5e5e" stop-opacity="0.03"/></linearGradient><linearGradient id="g55" gradientUnits="userSpaceOnUse" x1="0.0" y1="189.5" x2="1352.0" y2="254.2"><stop offset="0" stop-color="#5e5e5e" stop-opacity="0.01"/><stop offset="0.03" stop-color="#5e5e5e" stop-opacity="0.02"/><stop offset="0.08" stop-color="#5e5e5e" stop-opacity="0.02"/><stop offset="0.15" stop-color="#5e5e5e" stop-opacity="0.02"/><stop offset="0.3" stop-color="#5e5e5e" stop-opacity="0.04"/><stop offset="0.5" stop-color="#5e5e5e" stop-opacity="0.06"/><stop offset="0.75" stop-color="#5e5e5e" stop-opacity="0.11"/><stop offset="1.0" stop-color="#5e5e5e" stop-opacity="0.16"/></linearGradient><linearGradient id="g56" gradientUnits="userSpaceOnUse" x1="736.0" y1="126.6" x2="0.0" y2="214.7"><stop offset="0" stop-color="#5e5e5e" stop-opacity="0.00"/><stop offset="0.03" stop-color="#5e5e5e" stop-opacity="0.00"/><stop offset="0.08" stop-color="#5e5e5e" stop-opacity="0.00"/><stop offset="0.15" stop-color="#5e5e5e" stop-opacity="0.00"/><stop offset="0.3" stop-color="#5e5e5e" stop-opacity="0.00"/><stop offset="0.5" stop-color="#5e5e5e" stop-opacity="0.00"/><stop offset="0.75" stop-color="#5e5e5e" stop-opacity="0.02"/><stop offset="1.0" stop-color="#5e5e5e" stop-opacity="0.05"/></linearGradient><linearGradient id="g57" gradientUnits="userSpaceOnUse" x1="0.0" y1="196.8" x2="1352.0" y2="265.7"><stop offset="0" stop-color="#5e5e5e" stop-opacity="0.02"/><stop offset="0.03" stop-color="#5e5e5e" stop-opacity="0.02"/><stop offset="0.08" stop-color="#5e5e5e" stop-opacity="0.03"/><stop offset="0.15" stop-color="#5e5e5e" stop-opacity="0.04"/><stop offset="0.3" stop-color="#5e5e5e" stop-opacity="0.05"/><stop offset="0.5" stop-color="#5e5e5e" stop-opacity="0.09"/><stop offset="0.75" stop-color="#5e5e5e" stop-opacity="0.14"/><stop offset="1.0" stop-color="#5e5e5e" stop-opacity="0.20"/></linearGradient><linearGradient id="g58" gradientUnits="userSpaceOnUse" x1="771.3" y1="127.2" x2="0.0" y2="226.8"><stop offset="0" stop-color="#5e5e5e" stop-opacity="0.14"/><stop offset="0.03" stop-color="#5e5e5e" stop-opacity="0.15"/><stop offset="0.08" stop-color="#5e5e5e" stop-opacity="0.15"/><stop offset="0.15" stop-color="#5e5e5e" stop-opacity="0.15"/><stop offset="0.3" stop-color="#5e5e5e" stop-opacity="0.15"/><stop offset="0.5" stop-color="#5e5e5e" stop-opacity="0.15"/><stop offset="0.75" stop-color="#5e5e5e" stop-opacity="0.15"/><stop offset="1.0" stop-color="#5e5e5e" stop-opacity="0.15"/></linearGradient><linearGradient id="g59" gradientUnits="userSpaceOnUse" x1="0.0" y1="205.0" x2="1352.0" y2="278.8"><stop offset="0" stop-color="#5e5e5e" stop-opacity="0.15"/><stop offset="0.03" stop-color="#5e5e5e" stop-opacity="0.15"/><stop offset="0.08" stop-color="#5e5e5e" stop-opacity="0.15"/><stop offset="0.15" stop-color="#5e5e5e" stop-opacity="0.15"/><stop offset="0.3" stop-color="#5e5e5e" stop-opacity="0.15"/><stop offset="0.5" stop-color="#5e5e5e" stop-opacity="0.15"/><stop offset="0.75" stop-color="#5e5e5e" stop-opacity="0.18"/><stop offset="1.0" stop-color="#5e5e5e" stop-opacity="0.25"/></linearGradient><linearGradient id="g60" gradientUnits="userSpaceOnUse" x1="807.5" y1="127.8" x2="0.0" y2="241.1"><stop offset="0" stop-color="#5e5e5e" stop-opacity="0.00"/><stop offset="0.03" stop-color="#5e5e5e" stop-opacity="0.00"/><stop offset="0.08" stop-color="#5e5e5e" stop-opacity="0.00"/><stop offset="0.15" stop-color="#5e5e5e" stop-opacity="0.00"/><stop offset="0.3" stop-color="#5e5e5e" stop-opacity="0.00"/><stop offset="0.5" stop-color="#5e5e5e" stop-opacity="0.01"/><stop offset="0.75" stop-color="#5e5e5e" stop-opacity="0.04"/><stop offset="1.0" stop-color="#5e5e5e" stop-opacity="0.10"/></linearGradient><linearGradient id="g61" gradientUnits="userSpaceOnUse" x1="0.0" y1="214.3" x2="1352.0" y2="293.4"><stop offset="0" stop-color="#5e5e5e" stop-opacity="0.04"/><stop offset="0.03" stop-color="#5e5e5e" stop-opacity="0.05"/><stop offset="0.08" stop-color="#5e5e5e" stop-opacity="0.06"/><stop offset="0.15" stop-color="#5e5e5e" stop-opacity="0.07"/><stop offset="0.3" stop-color="#5e5e5e" stop-opacity="0.10"/><stop offset="0.5" stop-color="#5e5e5e" stop-opacity="0.15"/><stop offset="0.75" stop-color="#5e5e5e" stop-opacity="0.23"/><stop offset="1.0" stop-color="#5e5e5e" stop-opacity="0.32"/></linearGradient><linearGradient id="g62" gradientUnits="userSpaceOnUse" x1="844.6" y1="128.3" x2="0.0" y2="258.1"><stop offset="0" stop-color="#5e5e5e" stop-opacity="0.00"/><stop offset="0.03" stop-color="#5e5e5e" stop-opacity="0.00"/><stop offset="0.08" stop-color="#5e5e5e" stop-opacity="0.00"/><stop offset="0.15" stop-color="#5e5e5e" stop-opacity="0.00"/><stop offset="0.3" stop-color="#5e5e5e" stop-opacity="0.00"/><stop offset="0.5" stop-color="#5e5e5e" stop-opacity="0.02"/><stop offset="0.75" stop-color="#5e5e5e" stop-opacity="0.07"/><stop offset="1.0" stop-color="#5e5e5e" stop-opacity="0.15"/></linearGradient><linearGradient id="g63" gradientUnits="userSpaceOnUse" x1="0.0" y1="224.9" x2="1352.0" y2="310.3"><stop offset="0" stop-color="#5e5e5e" stop-opacity="0.06"/><stop offset="0.03" stop-color="#5e5e5e" stop-opacity="0.07"/><stop offset="0.08" stop-color="#5e5e5e" stop-opacity="0.08"/><stop offset="0.15" stop-color="#5e5e5e" stop-opacity="0.10"/><stop offset="0.3" stop-color="#5e5e5e" stop-opacity="0.13"/><stop offset="0.5" stop-color="#5e5e5e" stop-opacity="0.20"/><stop offset="0.75" stop-color="#5e5e5e" stop-opacity="0.29"/><stop offset="1.0" stop-color="#5e5e5e" stop-opacity="0.40"/></linearGradient><linearGradient id="g64" gradientUnits="userSpaceOnUse" x1="882.5" y1="128.9" x2="0.0" y2="278.9"><stop offset="0" stop-color="#5e5e5e" stop-opacity="0.00"/><stop offset="0.03" stop-color="#5e5e5e" stop-opacity="0.00"/><stop offset="0.08" stop-color="#5e5e5e" stop-opacity="0.00"/><stop offset="0.15" stop-color="#5e5e5e" stop-opacity="0.00"/><stop offset="0.3" stop-color="#5e5e5e" stop-opacity="0.00"/><stop offset="0.5" stop-color="#5e5e5e" stop-opacity="0.03"/><stop offset="0.75" stop-color="#5e5e5e" stop-opacity="0.11"/><stop offset="1.0" stop-color="#5e5e5e" stop-opacity="0.23"/></linearGradient><linearGradient id="g65" gradientUnits="userSpaceOnUse" x1="0.0" y1="237.2" x2="1352.0" y2="329.8"><stop offset="0" stop-color="#5e5e5e" stop-opacity="0.09"/><stop offset="0.03" stop-color="#5e5e5e" stop-opacity="0.10"/><stop offset="0.08" stop-color="#5e5e5e" stop-opacity="0.11"/><stop offset="0.15" stop-color="#5e5e5e" stop-opacity="0.13"/><stop offset="0.3" stop-color="#5e5e5e" stop-opacity="0.18"/><stop offset="0.5" stop-color="#5e5e5e" stop-opacity="0.26"/><stop offset="0.75" stop-color="#5e5e5e" stop-opacity="0.37"/><stop offset="1.0" stop-color="#5e5e5e" stop-opacity="0.50"/></linearGradient><linearGradient id="g66" gradientUnits="userSpaceOnUse" x1="921.4" y1="129.5" x2="0.0" y2="304.7"><stop offset="0" stop-color="#5e5e5e" stop-opacity="0.00"/><stop offset="0.03" stop-color="#5e5e5e" stop-opacity="0.00"/><stop offset="0.08" stop-color="#5e5e5e" stop-opacity="0.00"/><stop offset="0.15" stop-color="#5e5e5e" stop-opacity="0.00"/><stop offset="0.3" stop-color="#5e5e5e" stop-opacity="0.01"/><stop offset="0.5" stop-color="#5e5e5e" stop-opacity="0.05"/><stop offset="0.75" stop-color="#5e5e5e" stop-opacity="0.17"/><stop offset="1.0" stop-color="#5e5e5e" stop-opacity="0.34"/></linearGradient><linearGradient id="g67" gradientUnits="userSpaceOnUse" x1="0.0" y1="251.6" x2="1352.0" y2="352.6"><stop offset="0" stop-color="#5e5e5e" stop-opacity="0.13"/><stop offset="0.03" stop-color="#5e5e5e" stop-opacity="0.14"/><stop offset="0.08" stop-color="#5e5e5e" stop-opacity="0.16"/><stop offset="0.15" stop-color="#5e5e5e" stop-opacity="0.18"/><stop offset="0.3" stop-color="#5e5e5e" stop-opacity="0.25"/><stop offset="0.5" stop-color="#5e5e5e" stop-opacity="0.34"/><stop offset="0.75" stop-color="#5e5e5e" stop-opacity="0.48"/><stop offset="1.0" stop-color="#5e5e5e" stop-opacity="0.62"/></linearGradient><linearGradient id="g68" gradientUnits="userSpaceOnUse" x1="961.2" y1="130.2" x2="0.0" y2="337.9"><stop offset="0" stop-color="#5e5e5e" stop-opacity="0.00"/><stop offset="0.03" stop-color="#5e5e5e" stop-opacity="0.00"/><stop offset="0.08" stop-color="#5e5e5e" stop-opacity="0.00"/><stop offset="0.15" stop-color="#5e5e5e" stop-opacity="0.00"/><stop offset="0.3" stop-color="#5e5e5e" stop-opacity="0.02"/><stop offset="0.5" stop-color="#5e5e5e" stop-opacity="0.09"/><stop offset="0.75" stop-color="#5e5e5e" stop-opacity="0.26"/><stop offset="1.0" stop-color="#5e5e5e" stop-opacity="0.51"/></linearGradient><linearGradient id="g69" gradientUnits="userSpaceOnUse" x1="0.0" y1="268.7" x2="1352.0" y2="379.7"><stop offset="0" stop-color="#5e5e5e" stop-opacity="0.19"/><stop offset="0.03" stop-color="#5e5e5e" stop-opacity="0.20"/><stop offset="0.08" stop-color="#5e5e5e" stop-opacity="0.22"/><stop offset="0.15" stop-color="#5e5e5e" stop-opacity="0.26"/><stop offset="0.3" stop-color="#5e5e5e" stop-opacity="0.34"/><stop offset="0.5" stop-color="#5e5e5e" stop-opacity="0.45"/><stop offset="0.75" stop-color="#5e5e5e" stop-opacity="0.61"/><stop offset="1.0" stop-color="#5e5e5e" stop-opacity="0.77"/></linearGradient><linearGradient id="g70" gradientUnits="userSpaceOnUse" x1="1002.1" y1="130.8" x2="0.0" y2="381.8"><stop offset="0" stop-color="#5e5e5e" stop-opacity="0.00"/><stop offset="0.03" stop-color="#5e5e5e" stop-opacity="0.00"/><stop offset="0.08" stop-color="#5e5e5e" stop-opacity="0.00"/><stop offset="0.15" stop-color="#5e5e5e" stop-opacity="0.00"/><stop offset="0.3" stop-color="#5e5e5e" stop-opacity="0.04"/><stop offset="0.5" stop-color="#5e5e5e" stop-opacity="0.15"/><stop offset="0.75" stop-color="#5e5e5e" stop-opacity="0.42"/><stop offset="1.0" stop-color="#5e5e5e" stop-opacity="0.75"/></linearGradient><linearGradient id="g71" gradientUnits="userSpaceOnUse" x1="0.0" y1="289.2" x2="1352.0" y2="412.3"><stop offset="0" stop-color="#5e5e5e" stop-opacity="0.27"/><stop offset="0.03" stop-color="#5e5e5e" stop-opacity="0.29"/><stop offset="0.08" stop-color="#5e5e5e" stop-opacity="0.32"/><stop offset="0.15" stop-color="#5e5e5e" stop-opacity="0.36"/><stop offset="0.3" stop-color="#5e5e5e" stop-opacity="0.46"/><stop offset="0.5" stop-color="#5e5e5e" stop-opacity="0.60"/><stop offset="0.75" stop-color="#5e5e5e" stop-opacity="0.77"/><stop offset="1.0" stop-color="#5e5e5e" stop-opacity="0.92"/></linearGradient><linearGradient id="g72" gradientUnits="userSpaceOnUse" x1="1043.9" y1="131.5" x2="0.0" y2="442.7"><stop offset="0" stop-color="#5e5e5e" stop-opacity="0.00"/><stop offset="0.03" stop-color="#5e5e5e" stop-opacity="0.00"/><stop offset="0.08" stop-color="#5e5e5e" stop-opacity="0.00"/><stop offset="0.15" stop-color="#5e5e5e" stop-opacity="0.01"/><stop offset="0.3" stop-color="#5e5e5e" stop-opacity="0.07"/><stop offset="0.5" stop-color="#5e5e5e" stop-opacity="0.27"/><stop offset="0.75" stop-color="#5e5e5e" stop-opacity="0.66"/><stop offset="1.0" stop-color="#5e5e5e" stop-opacity="0.98"/></linearGradient><linearGradient id="g73" gradientUnits="userSpaceOnUse" x1="0.0" y1="314.5" x2="1352.0" y2="452.3"><stop offset="0" stop-color="#5e5e5e" stop-opacity="0.39"/><stop offset="0.03" stop-color="#5e5e5e" stop-opacity="0.41"/><stop offset="0.08" stop-color="#5e5e5e" stop-opacity="0.45"/><stop offset="0.15" stop-color="#5e5e5e" stop-opacity="0.50"/><stop offset="0.3" stop-color="#5e5e5e" stop-opacity="0.62"/><stop offset="0.5" stop-color="#5e5e5e" stop-opacity="0.77"/><stop offset="0.75" stop-color="#5e5e5e" stop-opacity="0.93"/><stop offset="1.0" stop-color="#5e5e5e" stop-opacity="1.00"/></linearGradient><linearGradient id="g74" gradientUnits="userSpaceOnUse" x1="1086.9" y1="132.1" x2="0.0" y2="532.8"><stop offset="0" stop-color="#5e5e5e" stop-opacity="0.00"/><stop offset="0.03" stop-color="#5e5e5e" stop-opacity="0.00"/><stop offset="0.08" stop-color="#5e5e5e" stop-opacity="0.00"/><stop offset="0.15" stop-color="#5e5e5e" stop-opacity="0.02"/><stop offset="0.3" stop-color="#5e5e5e" stop-opacity="0.15"/><stop offset="0.5" stop-color="#5e5e5e" stop-opacity="0.49"/><stop offset="0.75" stop-color="#5e5e5e" stop-opacity="0.97"/><stop offset="1.0" stop-color="#5e5e5e" stop-opacity="1.00"/></linearGradient><linearGradient id="g75" gradientUnits="userSpaceOnUse" x1="0.0" y1="346.3" x2="1352.0" y2="502.7"><stop offset="0" stop-color="#5e5e5e" stop-opacity="0.55"/><stop offset="0.03" stop-color="#5e5e5e" stop-opacity="0.58"/><stop offset="0.08" stop-color="#5e5e5e" stop-opacity="0.63"/><stop offset="0.15" stop-color="#5e5e5e" stop-opacity="0.69"/><stop offset="0.3" stop-color="#5e5e5e" stop-opacity="0.81"/><stop offset="0.5" stop-color="#5e5e5e" stop-opacity="0.95"/><stop offset="0.75" stop-color="#5e5e5e" stop-opacity="1.00"/><stop offset="1.0" stop-color="#5e5e5e" stop-opacity="1.00"/></linearGradient><linearGradient id="g76" gradientUnits="userSpaceOnUse" x1="1130.9" y1="132.8" x2="0.0" y2="680.2"><stop offset="0" stop-color="#5e5e5e" stop-opacity="0.00"/><stop offset="0.03" stop-color="#5e5e5e" stop-opacity="0.00"/><stop offset="0.08" stop-color="#5e5e5e" stop-opacity="0.01"/><stop offset="0.15" stop-color="#5e5e5e" stop-opacity="0.05"/><stop offset="0.3" stop-color="#5e5e5e" stop-opacity="0.32"/><stop offset="0.5" stop-color="#5e5e5e" stop-opacity="0.88"/><stop offset="0.75" stop-color="#5e5e5e" stop-opacity="1.00"/><stop offset="1.0" stop-color="#5e5e5e" stop-opacity="1.00"/></linearGradient><linearGradient id="g77" gradientUnits="userSpaceOnUse" x1="0.0" y1="387.5" x2="1352.0" y2="567.9"><stop offset="0" stop-color="#5e5e5e" stop-opacity="0.78"/><stop offset="0.03" stop-color="#5e5e5e" stop-opacity="0.80"/><stop offset="0.08" stop-color="#5e5e5e" stop-opacity="0.85"/><stop offset="0.15" stop-color="#5e5e5e" stop-opacity="0.90"/><stop offset="0.3" stop-color="#5e5e5e" stop-opacity="0.99"/><stop offset="0.5" stop-color="#5e5e5e" stop-opacity="1.00"/><stop offset="0.75" stop-color="#5e5e5e" stop-opacity="1.00"/><stop offset="1.0" stop-color="#5e5e5e" stop-opacity="1.00"/></linearGradient><linearGradient id="g78" gradientUnits="userSpaceOnUse" x1="1176.1" y1="133.5" x2="0.0" y2="964.4"><stop offset="0" stop-color="#5e5e5e" stop-opacity="0.15"/><stop offset="0.03" stop-color="#5e5e5e" stop-opacity="0.15"/><stop offset="0.08" stop-color="#5e5e5e" stop-opacity="0.15"/><stop offset="0.15" stop-color="#5e5e5e" stop-opacity="0.17"/><stop offset="0.3" stop-color="#5e5e5e" stop-opacity="0.77"/><stop offset="0.5" stop-color="#5e5e5e" stop-opacity="1.00"/><stop offset="0.75" stop-color="#5e5e5e" stop-opacity="1.00"/><stop offset="1.0" stop-color="#5e5e5e" stop-opacity="1.00"/></linearGradient><linearGradient id="g80" gradientUnits="userSpaceOnUse" x1="1222.5" y1="134.3" x2="515.9" y2="1063.0"><stop offset="0" stop-color="#5e5e5e" stop-opacity="0.00"/><stop offset="0.03" stop-color="#5e5e5e" stop-opacity="0.00"/><stop offset="0.08" stop-color="#5e5e5e" stop-opacity="0.04"/><stop offset="0.15" stop-color="#5e5e5e" stop-opacity="0.23"/><stop offset="0.3" stop-color="#5e5e5e" stop-opacity="0.91"/><stop offset="0.5" stop-color="#5e5e5e" stop-opacity="1.00"/><stop offset="0.75" stop-color="#5e5e5e" stop-opacity="1.00"/><stop offset="1.0" stop-color="#5e5e5e" stop-opacity="1.00"/></linearGradient><linearGradient id="g81" gradientUnits="userSpaceOnUse" x1="0.0" y1="521.7" x2="1352.0" y2="780.6"><stop offset="0" stop-color="#5e5e5e" stop-opacity="1.00"/><stop offset="0.03" stop-color="#5e5e5e" stop-opacity="1.00"/><stop offset="0.08" stop-color="#5e5e5e" stop-opacity="1.00"/><stop offset="0.15" stop-color="#5e5e5e" stop-opacity="1.00"/><stop offset="0.3" stop-color="#5e5e5e" stop-opacity="1.00"/><stop offset="0.5" stop-color="#5e5e5e" stop-opacity="1.00"/><stop offset="0.75" stop-color="#5e5e5e" stop-opacity="1.00"/><stop offset="1.0" stop-color="#5e5e5e" stop-opacity="1.00"/></linearGradient><linearGradient id="g82" gradientUnits="userSpaceOnUse" x1="1270.1" y1="135.0" x2="1175.3" y2="1063.0"><stop offset="0" stop-color="#5e5e5e" stop-opacity="0.00"/><stop offset="0.03" stop-color="#5e5e5e" stop-opacity="0.00"/><stop offset="0.08" stop-color="#5e5e5e" stop-opacity="0.05"/><stop offset="0.15" stop-color="#5e5e5e" stop-opacity="0.23"/><stop offset="0.3" stop-color="#5e5e5e" stop-opacity="0.92"/><stop offset="0.5" stop-color="#5e5e5e" stop-opacity="1.00"/><stop offset="0.75" stop-color="#5e5e5e" stop-opacity="1.00"/><stop offset="1.0" stop-color="#5e5e5e" stop-opacity="1.00"/></linearGradient><linearGradient id="g83" gradientUnits="userSpaceOnUse" x1="0.0" y1="642.2" x2="1352.0" y2="971.8"><stop offset="0" stop-color="#5e5e5e" stop-opacity="1.00"/><stop offset="0.03" stop-color="#5e5e5e" stop-opacity="1.00"/><stop offset="0.08" stop-color="#5e5e5e" stop-opacity="1.00"/><stop offset="0.15" stop-color="#5e5e5e" stop-opacity="1.00"/><stop offset="0.3" stop-color="#5e5e5e" stop-opacity="1.00"/><stop offset="0.5" stop-color="#5e5e5e" stop-opacity="1.00"/><stop offset="0.75" stop-color="#5e5e5e" stop-opacity="1.00"/><stop offset="1.0" stop-color="#5e5e5e" stop-opacity="1.00"/></linearGradient><linearGradient id="g85" gradientUnits="userSpaceOnUse" x1="0.0" y1="850.2" x2="637.7" y2="1063.0"><stop offset="0" stop-color="#5e5e5e" stop-opacity="1.00"/><stop offset="0.03" stop-color="#5e5e5e" stop-opacity="1.00"/><stop offset="0.08" stop-color="#5e5e5e" stop-opacity="1.00"/><stop offset="0.15" stop-color="#5e5e5e" stop-opacity="1.00"/><stop offset="0.3" stop-color="#5e5e5e" stop-opacity="1.00"/><stop offset="0.5" stop-color="#5e5e5e" stop-opacity="1.00"/><stop offset="0.75" stop-color="#5e5e5e" stop-opacity="1.00"/><stop offset="1.0" stop-color="#5e5e5e" stop-opacity="1.00"/></linearGradient></defs>
<g fill="none"><line x1="0.0" y1="115.1" x2="1352.0" y2="136.3" stroke="url(#g0)" stroke-width="1.4"/><line x1="0.0" y1="116.2" x2="1352.0" y2="138.0" stroke="url(#g1)" stroke-width="1.4"/><line x1="15.2" y1="115.3" x2="0.0" y2="115.9" stroke="url(#g2)" stroke-width="1.4"/><line x1="0.0" y1="117.2" x2="1352.0" y2="139.7" stroke="url(#g3)" stroke-width="1.4"/><line x1="35.8" y1="115.7" x2="0.0" y2="117.3" stroke="url(#g4)" stroke-width="1.4"/><line x1="0.0" y1="118.4" x2="1352.0" y2="141.5" stroke="url(#g5)" stroke-width="1.4"/><line x1="56.7" y1="116.0" x2="0.0" y2="118.5" stroke="url(#g6)" stroke-width="1.4"/><line x1="0.0" y1="119.6" x2="1352.0" y2="143.4" stroke="url(#g7)" stroke-width="1.4"/><line x1="78.0" y1="116.3" x2="0.0" y2="119.8" stroke="url(#g8)" stroke-width="1.4"/><line x1="0.0" y1="120.9" x2="1352.0" y2="145.5" stroke="url(#g9)" stroke-width="1.4"/><line x1="99.7" y1="116.7" x2="0.0" y2="121.3" stroke="url(#g10)" stroke-width="1.4"/><line x1="0.0" y1="122.2" x2="1352.0" y2="147.5" stroke="url(#g11)" stroke-width="1.4"/><line x1="121.8" y1="117.0" x2="0.0" y2="122.8" stroke="url(#g12)" stroke-width="1.4"/><line x1="0.0" y1="123.6" x2="1352.0" y2="149.8" stroke="url(#g13)" stroke-width="1.4"/><line x1="144.3" y1="117.4" x2="0.0" y2="124.5" stroke="url(#g14)" stroke-width="1.4"/><line x1="0.0" y1="125.1" x2="1352.0" y2="152.1" stroke="url(#g15)" stroke-width="1.4"/><line x1="167.2" y1="117.7" x2="0.0" y2="126.1" stroke="url(#g16)" stroke-width="1.4"/><line x1="0.0" y1="126.7" x2="1352.0" y2="154.6" stroke="url(#g17)" stroke-width="1.4"/><line x1="190.6" y1="118.1" x2="0.0" y2="128.0" stroke="url(#g18)" stroke-width="1.4"/><line x1="0.0" y1="128.3" x2="1352.0" y2="157.2" stroke="url(#g19)" stroke-width="1.4"/><line x1="214.4" y1="118.5" x2="0.0" y2="129.9" stroke="url(#g20)" stroke-width="1.4"/><line x1="0.0" y1="130.1" x2="1352.0" y2="160.0" stroke="url(#g21)" stroke-width="1.4"/><line x1="238.6" y1="118.8" x2="0.0" y2="131.9" stroke="url(#g22)" stroke-width="1.4"/><line x1="0.0" y1="131.9" x2="1352.0" y2="162.9" stroke="url(#g23)" stroke-width="1.4"/><line x1="263.3" y1="119.2" x2="0.0" y2="134.1" stroke="url(#g24)" stroke-width="1.4"/><line x1="0.0" y1="133.8" x2="1352.0" y2="166.0" stroke="url(#g25)" stroke-width="1.4"/><line x1="288.5" y1="119.6" x2="0.0" y2="136.5" stroke="url(#g26)" stroke-width="1.4"/><line x1="0.0" y1="135.9" x2="1352.0" y2="169.2" stroke="url(#g27)" stroke-width="1.4"/><line x1="314.2" y1="120.0" x2="0.0" y2="139.0" stroke="url(#g28)" stroke-width="1.4"/><line x1="0.0" y1="138.1" x2="1352.0" y2="172.8" stroke="url(#g29)" stroke-width="1.4"/><line x1="340.5" y1="120.4" x2="0.0" y2="141.7" stroke="url(#g30)" stroke-width="1.4"/><line x1="0.0" y1="140.5" x2="1352.0" y2="176.5" stroke="url(#g31)" stroke-width="1.4"/><line x1="367.2" y1="120.9" x2="0.0" y2="144.7" stroke="url(#g32)" stroke-width="1.4"/><line x1="0.0" y1="143.0" x2="1352.0" y2="180.5" stroke="url(#g33)" stroke-width="1.4"/><line x1="394.5" y1="121.3" x2="0.0" y2="147.9" stroke="url(#g34)" stroke-width="1.4"/><line x1="0.0" y1="145.7" x2="1352.0" y2="184.8" stroke="url(#g35)" stroke-width="1.4"/><line x1="422.3" y1="121.7" x2="0.0" y2="151.3" stroke="url(#g36)" stroke-width="1.4"/><line x1="0.0" y1="148.6" x2="1352.0" y2="189.4" stroke="url(#g37)" stroke-width="1.4"/><line x1="450.8" y1="122.2" x2="0.0" y2="155.1" stroke="url(#g38)" stroke-width="1.4"/><line x1="0.0" y1="151.7" x2="1352.0" y2="194.3" stroke="url(#g39)" stroke-width="1.4"/><line x1="479.8" y1="122.6" x2="0.0" y2="159.2" stroke="url(#g40)" stroke-width="1.4"/><line x1="0.0" y1="155.2" x2="1352.0" y2="199.8" stroke="url(#g41)" stroke-width="1.4"/><line x1="509.4" y1="123.1" x2="-0.0" y2="163.7" stroke="url(#g42)" stroke-width="1.4"/><line x1="0.0" y1="158.8" x2="1352.0" y2="205.6" stroke="url(#g43)" stroke-width="1.4"/><line x1="539.7" y1="123.6" x2="0.0" y2="168.8" stroke="url(#g44)" stroke-width="1.4"/><line x1="0.0" y1="162.8" x2="1352.0" y2="211.9" stroke="url(#g45)" stroke-width="1.4"/><line x1="570.6" y1="124.0" x2="0.0" y2="174.2" stroke="url(#g46)" stroke-width="1.4"/><line x1="0.0" y1="167.2" x2="1352.0" y2="218.8" stroke="url(#g47)" stroke-width="1.4"/><line x1="602.3" y1="124.5" x2="0.0" y2="180.5" stroke="url(#g48)" stroke-width="1.4"/><line x1="0.0" y1="172.0" x2="1352.0" y2="226.4" stroke="url(#g49)" stroke-width="1.4"/><line x1="634.6" y1="125.0" x2="0.0" y2="187.4" stroke="url(#g50)" stroke-width="1.4"/><line x1="0.0" y1="177.2" x2="1352.0" y2="234.7" stroke="url(#g51)" stroke-width="1.4"/><line x1="667.6" y1="125.6" x2="0.0" y2="195.4" stroke="url(#g52)" stroke-width="1.4"/><line x1="0.0" y1="183.1" x2="1352.0" y2="244.0" stroke="url(#g53)" stroke-width="1.4"/><line x1="701.4" y1="126.1" x2="0.0" y2="204.4" stroke="url(#g54)" stroke-width="1.4"/><line x1="0.0" y1="189.5" x2="1352.0" y2="254.2" stroke="url(#g55)" stroke-width="1.4"/><line x1="736.0" y1="126.6" x2="0.0" y2="214.7" stroke="url(#g56)" stroke-width="1.4"/><line x1="0.0" y1="196.8" x2="1352.0" y2="265.7" stroke="url(#g57)" stroke-width="1.4"/><line x1="771.3" y1="127.2" x2="0.0" y2="226.8" stroke="url(#g58)" stroke-width="1.4"/><line x1="0.0" y1="205.0" x2="1352.0" y2="278.8" stroke="url(#g59)" stroke-width="1.4"/><line x1="807.5" y1="127.8" x2="0.0" y2="241.1" stroke="url(#g60)" stroke-width="1.4"/><line x1="0.0" y1="214.3" x2="1352.0" y2="293.4" stroke="url(#g61)" stroke-width="1.4"/><line x1="844.6" y1="128.3" x2="0.0" y2="258.1" stroke="url(#g62)" stroke-width="1.4"/><line x1="0.0" y1="224.9" x2="1352.0" y2="310.3" stroke="url(#g63)" stroke-width="1.4"/><line x1="882.5" y1="128.9" x2="0.0" y2="278.9" stroke="url(#g64)" stroke-width="1.4"/><line x1="0.0" y1="237.2" x2="1352.0" y2="329.8" stroke="url(#g65)" stroke-width="1.4"/><line x1="921.4" y1="129.5" x2="0.0" y2="304.7" stroke="url(#g66)" stroke-width="1.4"/><line x1="0.0" y1="251.6" x2="1352.0" y2="352.6" stroke="url(#g67)" stroke-width="1.4"/><line x1="961.2" y1="130.2" x2="0.0" y2="337.9" stroke="url(#g68)" stroke-width="1.4"/><line x1="0.0" y1="268.7" x2="1352.0" y2="379.7" stroke="url(#g69)" stroke-width="1.4"/><line x1="1002.1" y1="130.8" x2="0.0" y2="381.8" stroke="url(#g70)" stroke-width="1.4"/><line x1="0.0" y1="289.2" x2="1352.0" y2="412.3" stroke="url(#g71)" stroke-width="1.4"/><line x1="1043.9" y1="131.5" x2="0.0" y2="442.7" stroke="url(#g72)" stroke-width="1.4"/><line x1="0.0" y1="314.5" x2="1352.0" y2="452.3" stroke="url(#g73)" stroke-width="1.4"/><line x1="1086.9" y1="132.1" x2="0.0" y2="532.8" stroke="url(#g74)" stroke-width="1.4"/><line x1="0.0" y1="346.3" x2="1352.0" y2="502.7" stroke="url(#g75)" stroke-width="1.4"/><line x1="1130.9" y1="132.8" x2="0.0" y2="680.2" stroke="url(#g76)" stroke-width="1.4"/><line x1="0.0" y1="387.5" x2="1352.0" y2="567.9" stroke="url(#g77)" stroke-width="1.4"/><line x1="1176.1" y1="133.5" x2="0.0" y2="964.4" stroke="url(#g78)" stroke-width="1.4"/><line x1="1222.5" y1="134.3" x2="515.9" y2="1063.0" stroke="url(#g80)" stroke-width="1.4"/><line x1="0.0" y1="521.7" x2="1352.0" y2="780.6" stroke="url(#g81)" stroke-width="1.4"/><line x1="1270.1" y1="135.0" x2="1175.3" y2="1063.0" stroke="url(#g82)" stroke-width="1.4"/><line x1="0.0" y1="642.2" x2="1352.0" y2="971.8" stroke="url(#g83)" stroke-width="1.4"/><line x1="0.0" y1="850.2" x2="637.7" y2="1063.0" stroke="url(#g85)" stroke-width="1.4"/></g>
<defs><linearGradient id="fade2" x1="0" y1="0" x2="0" y2="1"><stop offset="0.07" stop-color="#000"/><stop offset="0.09" stop-color="#aaa"/><stop offset="0.3" stop-color="#fff"/></linearGradient><mask id="afade" maskUnits="userSpaceOnUse" x="0" y="0" width="1353" height="1063"><rect width="1353" height="1063" fill="url(#fade2)"/><ellipse cx="504" cy="525" rx="288" ry="284" fill="#777"/></mask></defs>
<g mask="url(#afade)"><line x1="0.0" y1="442.9" x2="1352.0" y2="655.8" stroke="#9e3a4e" stroke-width="2"/><line x1="1326.1" y1="135.8" x2="1359.0" y2="194.5" stroke="#5f8a3a" stroke-width="2" stroke-opacity="0.8"/></g>
<defs>
<radialGradient id="shell" cx="0.45" cy="0.38" r="0.66"><stop offset="0" stop-color="#c4c4c4"/><stop offset="0.55" stop-color="#b8b8b8"/><stop offset="0.85" stop-color="#a4a4a4"/><stop offset="1" stop-color="#808080"/></radialGradient>
<radialGradient id="bshell" cx="0.5" cy="0.45" r="0.55"><stop offset="0" stop-color="#bebebe"/><stop offset="1" stop-color="#9a9a9a"/></radialGradient>
<filter id="bl2" x="-20%" y="-20%" width="140%" height="140%"><feGaussianBlur stdDeviation="1.2"/></filter>
<filter id="bl1"><feGaussianBlur stdDeviation="0.7"/></filter>
<mask id="mfront" maskUnits="userSpaceOnUse" x="0" y="0" width="1353" height="1063"><rect x="0" y="0" width="1353" height="1063" fill="#fff"/>
<ellipse cx="428.0" cy="268.0" rx="47.1" ry="11.8" transform="rotate(-10 428.0 268.0)" fill="#000" />
<ellipse cx="385.0" cy="320.0" rx="46.0" ry="30.0" transform="rotate(-18 385.0 320.0)" fill="#000" />
<ellipse cx="308.0" cy="337.0" rx="32.1" ry="11.8" transform="rotate(-45 308.0 337.0)" fill="#000" />
<ellipse cx="486.0" cy="331.0" rx="52.4" ry="33.2" transform="rotate(0 486.0 331.0)" fill="#000" />
<ellipse cx="277.0" cy="409.0" rx="22.5" ry="36.4" transform="rotate(25 277.0 409.0)" fill="#000" />
<ellipse cx="346.0" cy="412.0" rx="42.8" ry="46.0" transform="rotate(0 346.0 412.0)" fill="#000" />
<ellipse cx="447.0" cy="423.0" rx="48.2" ry="49.2" transform="rotate(0 447.0 423.0)" fill="#000" />
<ellipse cx="250.0" cy="505.0" rx="18.2" ry="48.2" transform="rotate(5 250.0 505.0)" fill="#000" />
<ellipse cx="322.0" cy="526.0" rx="40.7" ry="52.4" transform="rotate(10 322.0 526.0)" fill="#000" />
<ellipse cx="432.0" cy="543.0" rx="53.5" ry="55.6" transform="rotate(0 432.0 543.0)" fill="#000" />
<ellipse cx="253.0" cy="607.0" rx="18.2" ry="44.9" transform="rotate(-15 253.0 607.0)" fill="#000" />
<ellipse cx="323.0" cy="640.0" rx="40.7" ry="48.2" transform="rotate(-20 323.0 640.0)" fill="#000" />
<ellipse cx="431.0" cy="661.0" rx="53.5" ry="46.0" transform="rotate(0 431.0 661.0)" fill="#000" />
<ellipse cx="275.0" cy="692.0" rx="12.8" ry="42.8" transform="rotate(-40 275.0 692.0)" fill="#000" />
<ellipse cx="341.0" cy="725.0" rx="40.7" ry="27.8" transform="rotate(30 341.0 725.0)" fill="#000" />
<ellipse cx="444.0" cy="750.0" rx="50.3" ry="26.8" transform="rotate(15 444.0 750.0)" fill="#000" />
<ellipse cx="533.0" cy="276.0" rx="52.4" ry="16.1" transform="rotate(5 533.0 276.0)" fill="#000" />
<ellipse cx="635.0" cy="322.0" rx="47.1" ry="28.9" transform="rotate(25 635.0 322.0)" fill="#000" />
<ellipse cx="586.0" cy="364.0" rx="42.8" ry="32.1" transform="rotate(8 586.0 364.0)" fill="#000" />
<ellipse cx="709.0" cy="406.0" rx="30.0" ry="49.2" transform="rotate(-20 709.0 406.0)" fill="#000" />
<ellipse cx="557.0" cy="443.0" rx="41.7" ry="42.8" transform="rotate(0 557.0 443.0)" fill="#000" />
<ellipse cx="648.0" cy="437.0" rx="33.2" ry="42.8" transform="rotate(5 648.0 437.0)" fill="#000" />
<ellipse cx="741.0" cy="520.0" rx="21.4" ry="55.6" transform="rotate(-10 741.0 520.0)" fill="#000" />
<ellipse cx="665.0" cy="545.0" rx="39.6" ry="53.5" transform="rotate(0 665.0 545.0)" fill="#000" />
<ellipse cx="556.0" cy="554.0" rx="53.5" ry="54.6" transform="rotate(0 556.0 554.0)" fill="#000" />
<ellipse cx="551.0" cy="667.0" rx="52.4" ry="43.9" transform="rotate(0 551.0 667.0)" fill="#000" />
<ellipse cx="661.0" cy="657.0" rx="41.7" ry="44.9" transform="rotate(-10 661.0 657.0)" fill="#000" />
<ellipse cx="735.0" cy="630.0" rx="26.8" ry="53.5" transform="rotate(25 735.0 630.0)" fill="#000" />
<ellipse cx="547.0" cy="748.0" rx="40.7" ry="21.4" transform="rotate(-3 547.0 748.0)" fill="#000" />
<ellipse cx="634.0" cy="740.0" rx="34.2" ry="23.5" transform="rotate(-30 634.0 740.0)" fill="#000" />
<ellipse cx="695.0" cy="728.0" rx="44.9" ry="9.6" transform="rotate(-45 695.0 728.0)" fill="#000" />
<ellipse cx="566.0" cy="789.0" rx="50.3" ry="6.4" transform="rotate(-5 566.0 789.0)" fill="#000" />
<ellipse cx="476.0" cy="797.0" rx="48.2" ry="8.6" transform="rotate(8 476.0 797.0)" fill="#000" />
</mask>
<mask id="mback" maskUnits="userSpaceOnUse" x="0" y="0" width="1353" height="1063"><rect x="0" y="0" width="1353" height="1063" fill="#fff"/>
<ellipse cx="428.0" cy="268.0" rx="44.8" ry="9.0" transform="rotate(-10 428.0 268.0)" fill="#000" />
<ellipse cx="392.0" cy="318.0" rx="38.1" ry="26.9" transform="rotate(-15 392.0 318.0)" fill="#000" />
<ellipse cx="308.0" cy="337.0" rx="29.1" ry="9.0" transform="rotate(-45 308.0 337.0)" fill="#000" />
<ellipse cx="463.0" cy="342.0" rx="26.9" ry="22.4" transform="rotate(0 463.0 342.0)" fill="#000" />
<ellipse cx="517.0" cy="332.0" rx="19.0" ry="24.6" transform="rotate(0 517.0 332.0)" fill="#000" />
<ellipse cx="281.0" cy="410.0" rx="16.8" ry="33.6" transform="rotate(25 281.0 410.0)" fill="#000" />
<ellipse cx="362.0" cy="418.0" rx="23.5" ry="34.7" transform="rotate(0 362.0 418.0)" fill="#000" />
<ellipse cx="318.0" cy="422.0" rx="10.1" ry="26.9" transform="rotate(0 318.0 422.0)" fill="#000" />
<ellipse cx="455.0" cy="413.0" rx="40.3" ry="35.8" transform="rotate(0 455.0 413.0)" fill="#000" />
<ellipse cx="450.0" cy="467.0" rx="20.2" ry="5.6" transform="rotate(0 450.0 467.0)" fill="#000" />
<ellipse cx="254.0" cy="505.0" rx="13.4" ry="39.2" transform="rotate(5 254.0 505.0)" fill="#000" />
<ellipse cx="308.0" cy="525.0" rx="24.6" ry="44.8" transform="rotate(10 308.0 525.0)" fill="#000" />
<ellipse cx="447.0" cy="511.0" rx="33.6" ry="20.2" transform="rotate(0 447.0 511.0)" fill="#000" />
<ellipse cx="397.0" cy="575.0" rx="10.1" ry="24.6" transform="rotate(0 397.0 575.0)" fill="#000" />
<ellipse cx="453.0" cy="573.0" rx="28.0" ry="26.9" transform="rotate(0 453.0 573.0)" fill="#000" />
<ellipse cx="255.0" cy="607.0" rx="12.3" ry="40.3" transform="rotate(-15 255.0 607.0)" fill="#000" />
<ellipse cx="327.0" cy="620.0" rx="28.0" ry="25.8" transform="rotate(30 327.0 620.0)" fill="#000" />
<ellipse cx="354.0" cy="667.0" rx="6.7" ry="13.4" transform="rotate(0 354.0 667.0)" fill="#000" />
<ellipse cx="430.0" cy="640.0" rx="34.7" ry="24.6" transform="rotate(0 430.0 640.0)" fill="#000" />
<ellipse cx="400.0" cy="678.0" rx="20.2" ry="26.9" transform="rotate(-20 400.0 678.0)" fill="#000" />
<ellipse cx="473.0" cy="670.0" rx="9.0" ry="20.2" transform="rotate(0 473.0 670.0)" fill="#000" />
<ellipse cx="276.0" cy="692.0" rx="9.0" ry="40.3" transform="rotate(-40 276.0 692.0)" fill="#000" />
<ellipse cx="340.0" cy="716.0" rx="33.6" ry="16.8" transform="rotate(30 340.0 716.0)" fill="#000" />
<ellipse cx="455.0" cy="738.0" rx="33.6" ry="13.4" transform="rotate(15 455.0 738.0)" fill="#000" />
<ellipse cx="431.0" cy="760.0" rx="31.4" ry="11.2" transform="rotate(15 431.0 760.0)" fill="#000" />
<ellipse cx="530.0" cy="275.0" rx="49.3" ry="14.6" transform="rotate(5 530.0 275.0)" fill="#000" />
<ellipse cx="631.0" cy="330.0" rx="35.8" ry="20.2" transform="rotate(25 631.0 330.0)" fill="#000" />
<ellipse cx="561.0" cy="349.0" rx="16.8" ry="14.6" transform="rotate(0 561.0 349.0)" fill="#000" />
<ellipse cx="611.0" cy="355.0" rx="15.7" ry="14.6" transform="rotate(30 611.0 355.0)" fill="#000" />
<ellipse cx="703.0" cy="380.0" rx="21.3" ry="15.7" transform="rotate(20 703.0 380.0)" fill="#000" />
<ellipse cx="714.0" cy="428.0" rx="24.6" ry="24.6" transform="rotate(30 714.0 428.0)" fill="#000" />
<ellipse cx="550.0" cy="428.0" rx="34.7" ry="24.6" transform="rotate(0 550.0 428.0)" fill="#000" />
<ellipse cx="550.0" cy="474.0" rx="25.8" ry="10.1" transform="rotate(0 550.0 474.0)" fill="#000" />
<ellipse cx="645.0" cy="429.0" rx="29.1" ry="34.7" transform="rotate(0 645.0 429.0)" fill="#000" />
<ellipse cx="744.0" cy="544.0" rx="16.8" ry="25.8" transform="rotate(0 744.0 544.0)" fill="#000" />
<ellipse cx="548.0" cy="522.0" rx="37.0" ry="20.2" transform="rotate(0 548.0 522.0)" fill="#000" />
<ellipse cx="536.0" cy="580.0" rx="31.4" ry="26.9" transform="rotate(20 536.0 580.0)" fill="#000" />
<ellipse cx="592.0" cy="585.0" rx="11.2" ry="12.3" transform="rotate(0 592.0 585.0)" fill="#000" />
<ellipse cx="648.0" cy="531.0" rx="19.0" ry="24.6" transform="rotate(0 648.0 531.0)" fill="#000" />
<ellipse cx="692.0" cy="538.0" rx="11.2" ry="33.6" transform="rotate(0 692.0 538.0)" fill="#000" />
<ellipse cx="640.0" cy="584.0" rx="6.7" ry="10.1" transform="rotate(0 640.0 584.0)" fill="#000" />
<ellipse cx="521.0" cy="668.0" rx="20.2" ry="32.5" transform="rotate(0 521.0 668.0)" fill="#000" />
<ellipse cx="576.0" cy="682.0" rx="26.9" ry="29.1" transform="rotate(30 576.0 682.0)" fill="#000" />
<ellipse cx="678.0" cy="630.0" rx="21.3" ry="16.8" transform="rotate(0 678.0 630.0)" fill="#000" />
<ellipse cx="663.0" cy="680.0" rx="28.0" ry="21.3" transform="rotate(-15 663.0 680.0)" fill="#000" />
<ellipse cx="730.0" cy="639.0" rx="11.2" ry="29.1" transform="rotate(15 730.0 639.0)" fill="#000" />
<ellipse cx="550.0" cy="749.0" rx="37.0" ry="20.2" transform="rotate(0 550.0 749.0)" fill="#000" />
<ellipse cx="636.0" cy="741.0" rx="29.1" ry="19.0" transform="rotate(-30 636.0 741.0)" fill="#000" />
<ellipse cx="428.0" cy="268.0" rx="47.1" ry="11.8" transform="rotate(-10 428.0 268.0)" fill="#000" />
<ellipse cx="308.0" cy="337.0" rx="32.1" ry="11.8" transform="rotate(-45 308.0 337.0)" fill="#000" />
<ellipse cx="277.0" cy="409.0" rx="22.5" ry="36.4" transform="rotate(25 277.0 409.0)" fill="#000" />
<ellipse cx="250.0" cy="505.0" rx="18.2" ry="48.2" transform="rotate(5 250.0 505.0)" fill="#000" />
<ellipse cx="253.0" cy="607.0" rx="18.2" ry="44.9" transform="rotate(-15 253.0 607.0)" fill="#000" />
<ellipse cx="533.0" cy="276.0" rx="52.4" ry="16.1" transform="rotate(5 533.0 276.0)" fill="#000" />
</mask>
<clipPath id="sclip"><path d="M789.4,525.5 L789.5,533.0 L789.5,540.5 L789.4,548.0 L789.0,555.5 L788.6,563.0 L787.9,570.5 L787.0,578.0 L786.0,585.4 L784.7,592.9 L783.3,600.3 L781.6,607.7 L779.7,615.1 L777.6,622.4 L775.3,629.6 L772.7,636.8 L769.9,643.9 L766.9,650.9 L763.7,657.8 L760.2,664.6 L756.5,671.3 L752.6,677.9 L748.5,684.3 L744.2,690.6 L739.8,696.8 L735.1,702.8 L730.2,708.7 L725.2,714.4 L720.0,720.0 L714.7,725.5 L709.3,730.8 L703.7,735.9 L697.9,740.9 L692.1,745.7 L686.1,750.4 L680.0,754.9 L673.8,759.2 L667.5,763.4 L661.1,767.5 L654.7,771.4 L648.1,775.1 L641.4,778.6 L634.7,782.0 L627.9,785.2 L621.0,788.2 L614.0,791.0 L606.9,793.6 L599.8,796.0 L592.6,798.3 L585.4,800.3 L578.1,802.1 L570.8,803.7 L563.4,805.0 L556.0,806.2 L548.6,807.1 L541.2,807.8 L533.7,808.3 L526.3,808.6 L518.8,808.7 L511.4,808.6 L504.0,808.2 L496.6,807.7 L489.2,807.0 L481.9,806.1 L474.6,805.0 L467.4,803.8 L460.1,802.4 L453.0,800.9 L445.8,799.3 L438.7,797.5 L431.6,795.6 L424.6,793.6 L417.6,791.5 L410.6,789.2 L403.7,786.9 L396.8,784.4 L389.9,781.8 L383.0,779.1 L376.2,776.3 L369.4,773.4 L362.6,770.3 L355.9,767.1 L349.2,763.8 L342.6,760.3 L336.1,756.7 L329.6,752.8 L323.2,748.8 L316.8,744.6 L310.6,740.3 L304.5,735.7 L298.6,730.9 L292.8,725.9 L287.1,720.8 L281.7,715.4 L276.4,709.8 L271.3,704.0 L266.5,698.1 L261.9,691.9 L257.5,685.6 L253.3,679.1 L249.4,672.5 L245.8,665.7 L242.4,658.8 L239.2,651.8 L236.3,644.7 L233.7,637.5 L231.3,630.2 L229.1,622.8 L227.2,615.4 L225.5,608.0 L224.0,600.5 L222.7,593.0 L221.7,585.5 L220.7,578.0 L220.0,570.5 L219.4,563.0 L219.0,555.5 L218.8,547.9 L218.7,540.5 L218.7,533.0 L218.8,525.5 L219.1,518.0 L219.5,510.6 L220.1,503.2 L220.8,495.7 L221.6,488.3 L222.5,480.9 L223.6,473.5 L224.9,466.2 L226.3,458.8 L227.8,451.5 L229.6,444.2 L231.5,437.0 L233.6,429.7 L235.8,422.6 L238.3,415.5 L241.0,408.4 L243.9,401.4 L247.0,394.5 L250.2,387.7 L253.7,381.0 L257.4,374.4 L261.4,367.9 L265.5,361.6 L269.8,355.3 L274.3,349.2 L279.0,343.3 L283.9,337.5 L288.9,331.8 L294.1,326.3 L299.5,321.0 L305.0,315.8 L310.7,310.8 L316.5,306.0 L322.5,301.4 L328.6,296.9 L334.7,292.5 L341.0,288.4 L347.4,284.4 L353.9,280.6 L360.5,277.0 L367.2,273.5 L373.9,270.2 L380.7,267.1 L387.6,264.1 L394.6,261.4 L401.6,258.8 L408.7,256.4 L415.8,254.1 L423.0,252.0 L430.2,250.1 L437.5,248.4 L444.8,246.9 L452.1,245.6 L459.5,244.4 L466.9,243.4 L474.3,242.6 L481.7,242.0 L489.1,241.6 L496.6,241.3 L504.0,241.3 L511.4,241.4 L518.9,241.7 L526.3,242.1 L533.7,242.7 L541.1,243.6 L548.5,244.5 L555.9,245.7 L563.2,247.0 L570.5,248.5 L577.8,250.1 L585.0,251.9 L592.3,253.9 L599.4,256.0 L606.6,258.3 L613.6,260.8 L620.7,263.4 L627.7,266.2 L634.6,269.2 L641.4,272.4 L648.2,275.7 L654.9,279.3 L661.5,283.0 L668.0,286.9 L674.4,291.0 L680.7,295.3 L686.8,299.7 L692.8,304.4 L698.7,309.3 L704.4,314.3 L710.0,319.5 L715.4,324.9 L720.6,330.5 L725.6,336.3 L730.4,342.2 L735.0,348.2 L739.4,354.5 L743.6,360.8 L747.6,367.3 L751.4,373.9 L755.0,380.6 L758.4,387.4 L761.5,394.3 L764.5,401.3 L767.3,408.3 L769.8,415.4 L772.2,422.5 L774.4,429.7 L776.5,437.0 L778.4,444.2 L780.1,451.5 L781.6,458.8 L783.0,466.2 L784.3,473.5 L785.5,480.9 L786.4,488.3 L787.3,495.7 L788.0,503.1 L788.6,510.6 L789.1,518.0 Z"/></clipPath>
<clipPath id="hc0"><ellipse cx="428.0" cy="268.0" rx="47.1" ry="11.8" transform="rotate(-10 428.0 268.0)" fill="#000" /></clipPath>
<mask id="hm0" maskUnits="userSpaceOnUse" x="0" y="0" width="1353" height="1063"><rect width="1353" height="1063" fill="#fff"/><ellipse cx="426.6" cy="263.3" rx="47.1" ry="11.8" transform="rotate(-10 426.6 263.3)" fill="#000" /></mask>
<clipPath id="hc1"><ellipse cx="385.0" cy="320.0" rx="46.0" ry="30.0" transform="rotate(-18 385.0 320.0)" fill="#000" /></clipPath>
<mask id="hm1" maskUnits="userSpaceOnUse" x="0" y="0" width="1353" height="1063"><rect width="1353" height="1063" fill="#fff"/><ellipse cx="380.4" cy="312.0" rx="46.0" ry="30.0" transform="rotate(-18 380.4 312.0)" fill="#000" /></mask>
<clipPath id="hc2"><ellipse cx="308.0" cy="337.0" rx="32.1" ry="11.8" transform="rotate(-45 308.0 337.0)" fill="#000" /></clipPath>
<mask id="hm2" maskUnits="userSpaceOnUse" x="0" y="0" width="1353" height="1063"><rect width="1353" height="1063" fill="#fff"/><ellipse cx="304.4" cy="333.6" rx="32.1" ry="11.8" transform="rotate(-45 304.4 333.6)" fill="#000" /></mask>
<clipPath id="hc3"><ellipse cx="486.0" cy="331.0" rx="52.4" ry="33.2" transform="rotate(0 486.0 331.0)" fill="#000" /></clipPath>
<mask id="hm3" maskUnits="userSpaceOnUse" x="0" y="0" width="1353" height="1063"><rect width="1353" height="1063" fill="#fff"/><ellipse cx="485.3" cy="323.4" rx="52.4" ry="33.2" transform="rotate(0 485.3 323.4)" fill="#000" /></mask>
<clipPath id="hc4"><ellipse cx="277.0" cy="409.0" rx="22.5" ry="36.4" transform="rotate(25 277.0 409.0)" fill="#000" /></clipPath>
<mask id="hm4" maskUnits="userSpaceOnUse" x="0" y="0" width="1353" height="1063"><rect width="1353" height="1063" fill="#fff"/><ellipse cx="268.6" cy="404.7" rx="22.5" ry="36.4" transform="rotate(25 268.6 404.7)" fill="#000" /></mask>
<clipPath id="hc5"><ellipse cx="346.0" cy="412.0" rx="42.8" ry="46.0" transform="rotate(0 346.0 412.0)" fill="#000" /></clipPath>
<mask id="hm5" maskUnits="userSpaceOnUse" x="0" y="0" width="1353" height="1063"><rect width="1353" height="1063" fill="#fff"/><ellipse cx="339.9" cy="407.6" rx="42.8" ry="46.0" transform="rotate(0 339.9 407.6)" fill="#000" /></mask>
<clipPath id="hc6"><ellipse cx="447.0" cy="423.0" rx="48.2" ry="49.2" transform="rotate(0 447.0 423.0)" fill="#000" /></clipPath>
<mask id="hm6" maskUnits="userSpaceOnUse" x="0" y="0" width="1353" height="1063"><rect width="1353" height="1063" fill="#fff"/><ellipse cx="444.8" cy="419.0" rx="48.2" ry="49.2" transform="rotate(0 444.8 419.0)" fill="#000" /></mask>
<clipPath id="hc7"><ellipse cx="250.0" cy="505.0" rx="18.2" ry="48.2" transform="rotate(5 250.0 505.0)" fill="#000" /></clipPath>
<mask id="hm7" maskUnits="userSpaceOnUse" x="0" y="0" width="1353" height="1063"><rect width="1353" height="1063" fill="#fff"/><ellipse cx="242.4" cy="504.4" rx="18.2" ry="48.2" transform="rotate(5 242.4 504.4)" fill="#000" /></mask>
<clipPath id="hc8"><ellipse cx="322.0" cy="526.0" rx="40.7" ry="52.4" transform="rotate(10 322.0 526.0)" fill="#000" /></clipPath>
<mask id="hm8" maskUnits="userSpaceOnUse" x="0" y="0" width="1353" height="1063"><rect width="1353" height="1063" fill="#fff"/><ellipse cx="314.9" cy="526.0" rx="40.7" ry="52.4" transform="rotate(10 314.9 526.0)" fill="#000" /></mask>
<clipPath id="hc9"><ellipse cx="432.0" cy="543.0" rx="53.5" ry="55.6" transform="rotate(0 432.0 543.0)" fill="#000" /></clipPath>
<mask id="hm9" maskUnits="userSpaceOnUse" x="0" y="0" width="1353" height="1063"><rect width="1353" height="1063" fill="#fff"/><ellipse cx="429.2" cy="543.7" rx="53.5" ry="55.6" transform="rotate(0 429.2 543.7)" fill="#000" /></mask>
<clipPath id="hc10"><ellipse cx="253.0" cy="607.0" rx="18.2" ry="44.9" transform="rotate(-15 253.0 607.0)" fill="#000" /></clipPath>
<mask id="hm10" maskUnits="userSpaceOnUse" x="0" y="0" width="1353" height="1063"><rect width="1353" height="1063" fill="#fff"/><ellipse cx="245.7" cy="609.4" rx="18.2" ry="44.9" transform="rotate(-15 245.7 609.4)" fill="#000" /></mask>
<clipPath id="hc11"><ellipse cx="323.0" cy="640.0" rx="40.7" ry="48.2" transform="rotate(-20 323.0 640.0)" fill="#000" /></clipPath>
<mask id="hm11" maskUnits="userSpaceOnUse" x="0" y="0" width="1353" height="1063"><rect width="1353" height="1063" fill="#fff"/><ellipse cx="316.0" cy="644.5" rx="40.7" ry="48.2" transform="rotate(-20 316.0 644.5)" fill="#000" /></mask>
<clipPath id="hc12"><ellipse cx="431.0" cy="661.0" rx="53.5" ry="46.0" transform="rotate(0 431.0 661.0)" fill="#000" /></clipPath>
<mask id="hm12" maskUnits="userSpaceOnUse" x="0" y="0" width="1353" height="1063"><rect width="1353" height="1063" fill="#fff"/><ellipse cx="428.2" cy="666.3" rx="53.5" ry="46.0" transform="rotate(0 428.2 666.3)" fill="#000" /></mask>
<clipPath id="hc13"><ellipse cx="275.0" cy="692.0" rx="12.8" ry="42.8" transform="rotate(-40 275.0 692.0)" fill="#000" /></clipPath>
<mask id="hm13" maskUnits="userSpaceOnUse" x="0" y="0" width="1353" height="1063"><rect width="1353" height="1063" fill="#fff"/><ellipse cx="270.6" cy="695.2" rx="12.8" ry="42.8" transform="rotate(-40 270.6 695.2)" fill="#000" /></mask>
<clipPath id="hc14"><ellipse cx="341.0" cy="725.0" rx="40.7" ry="27.8" transform="rotate(30 341.0 725.0)" fill="#000" /></clipPath>
<mask id="hm14" maskUnits="userSpaceOnUse" x="0" y="0" width="1353" height="1063"><rect width="1353" height="1063" fill="#fff"/><ellipse cx="334.7" cy="732.8" rx="40.7" ry="27.8" transform="rotate(30 334.7 732.8)" fill="#000" /></mask>
<clipPath id="hc15"><ellipse cx="444.0" cy="750.0" rx="50.3" ry="26.8" transform="rotate(15 444.0 750.0)" fill="#000" /></clipPath>
<mask id="hm15" maskUnits="userSpaceOnUse" x="0" y="0" width="1353" height="1063"><rect width="1353" height="1063" fill="#fff"/><ellipse cx="441.7" cy="758.7" rx="50.3" ry="26.8" transform="rotate(15 441.7 758.7)" fill="#000" /></mask>
<clipPath id="hc16"><ellipse cx="533.0" cy="276.0" rx="52.4" ry="16.1" transform="rotate(5 533.0 276.0)" fill="#000" /></clipPath>
<mask id="hm16" maskUnits="userSpaceOnUse" x="0" y="0" width="1353" height="1063"><rect width="1353" height="1063" fill="#fff"/><ellipse cx="533.8" cy="269.3" rx="52.4" ry="16.1" transform="rotate(5 533.8 269.3)" fill="#000" /></mask>
<clipPath id="hc17"><ellipse cx="635.0" cy="322.0" rx="47.1" ry="28.9" transform="rotate(25 635.0 322.0)" fill="#000" /></clipPath>
<mask id="hm17" maskUnits="userSpaceOnUse" x="0" y="0" width="1353" height="1063"><rect width="1353" height="1063" fill="#fff"/><ellipse cx="640.1" cy="314.1" rx="47.1" ry="28.9" transform="rotate(25 640.1 314.1)" fill="#000" /></mask>
<clipPath id="hc18"><ellipse cx="586.0" cy="364.0" rx="42.8" ry="32.1" transform="rotate(8 586.0 364.0)" fill="#000" /></clipPath>
<mask id="hm18" maskUnits="userSpaceOnUse" x="0" y="0" width="1353" height="1063"><rect width="1353" height="1063" fill="#fff"/><ellipse cx="589.2" cy="357.7" rx="42.8" ry="32.1" transform="rotate(8 589.2 357.7)" fill="#000" /></mask>
<clipPath id="hc19"><ellipse cx="709.0" cy="406.0" rx="30.0" ry="49.2" transform="rotate(-20 709.0 406.0)" fill="#000" /></clipPath>
<mask id="hm19" maskUnits="userSpaceOnUse" x="0" y="0" width="1353" height="1063"><rect width="1353" height="1063" fill="#fff"/><ellipse cx="717.0" cy="401.4" rx="30.0" ry="49.2" transform="rotate(-20 717.0 401.4)" fill="#000" /></mask>
<clipPath id="hc20"><ellipse cx="557.0" cy="443.0" rx="41.7" ry="42.8" transform="rotate(0 557.0 443.0)" fill="#000" /></clipPath>
<mask id="hm20" maskUnits="userSpaceOnUse" x="0" y="0" width="1353" height="1063"><rect width="1353" height="1063" fill="#fff"/><ellipse cx="559.1" cy="439.8" rx="41.7" ry="42.8" transform="rotate(0 559.1 439.8)" fill="#000" /></mask>
<clipPath id="hc21"><ellipse cx="648.0" cy="437.0" rx="33.2" ry="42.8" transform="rotate(5 648.0 437.0)" fill="#000" /></clipPath>
<mask id="hm21" maskUnits="userSpaceOnUse" x="0" y="0" width="1353" height="1063"><rect width="1353" height="1063" fill="#fff"/><ellipse cx="653.6" cy="433.6" rx="33.2" ry="42.8" transform="rotate(5 653.6 433.6)" fill="#000" /></mask>
<clipPath id="hc22"><ellipse cx="741.0" cy="520.0" rx="21.4" ry="55.6" transform="rotate(-10 741.0 520.0)" fill="#000" /></clipPath>
<mask id="hm22" maskUnits="userSpaceOnUse" x="0" y="0" width="1353" height="1063"><rect width="1353" height="1063" fill="#fff"/><ellipse cx="750.0" cy="519.8" rx="21.4" ry="55.6" transform="rotate(-10 750.0 519.8)" fill="#000" /></mask>
<clipPath id="hc23"><ellipse cx="665.0" cy="545.0" rx="39.6" ry="53.5" transform="rotate(0 665.0 545.0)" fill="#000" /></clipPath>
<mask id="hm23" maskUnits="userSpaceOnUse" x="0" y="0" width="1353" height="1063"><rect width="1353" height="1063" fill="#fff"/><ellipse cx="671.3" cy="545.8" rx="39.6" ry="53.5" transform="rotate(0 671.3 545.8)" fill="#000" /></mask>
<clipPath id="hc24"><ellipse cx="556.0" cy="554.0" rx="53.5" ry="54.6" transform="rotate(0 556.0 554.0)" fill="#000" /></clipPath>
<mask id="hm24" maskUnits="userSpaceOnUse" x="0" y="0" width="1353" height="1063"><rect width="1353" height="1063" fill="#fff"/><ellipse cx="558.0" cy="555.1" rx="53.5" ry="54.6" transform="rotate(0 558.0 555.1)" fill="#000" /></mask>
<clipPath id="hc25"><ellipse cx="551.0" cy="667.0" rx="52.4" ry="43.9" transform="rotate(0 551.0 667.0)" fill="#000" /></clipPath>
<mask id="hm25" maskUnits="userSpaceOnUse" x="0" y="0" width="1353" height="1063"><rect width="1353" height="1063" fill="#fff"/><ellipse cx="552.8" cy="672.5" rx="52.4" ry="43.9" transform="rotate(0 552.8 672.5)" fill="#000" /></mask>
<clipPath id="hc26"><ellipse cx="661.0" cy="657.0" rx="41.7" ry="44.9" transform="rotate(-10 661.0 657.0)" fill="#000" /></clipPath>
<mask id="hm26" maskUnits="userSpaceOnUse" x="0" y="0" width="1353" height="1063"><rect width="1353" height="1063" fill="#fff"/><ellipse cx="667.1" cy="662.1" rx="41.7" ry="44.9" transform="rotate(-10 667.1 662.1)" fill="#000" /></mask>
<clipPath id="hc27"><ellipse cx="735.0" cy="630.0" rx="26.8" ry="53.5" transform="rotate(25 735.0 630.0)" fill="#000" /></clipPath>
<mask id="hm27" maskUnits="userSpaceOnUse" x="0" y="0" width="1353" height="1063"><rect width="1353" height="1063" fill="#fff"/><ellipse cx="744.0" cy="634.1" rx="26.8" ry="53.5" transform="rotate(25 744.0 634.1)" fill="#000" /></mask>
<clipPath id="hc28"><ellipse cx="547.0" cy="748.0" rx="40.7" ry="21.4" transform="rotate(-3 547.0 748.0)" fill="#000" /></clipPath>
<mask id="hm28" maskUnits="userSpaceOnUse" x="0" y="0" width="1353" height="1063"><rect width="1353" height="1063" fill="#fff"/><ellipse cx="548.7" cy="756.6" rx="40.7" ry="21.4" transform="rotate(-3 548.7 756.6)" fill="#000" /></mask>
<clipPath id="hc29"><ellipse cx="634.0" cy="740.0" rx="34.2" ry="23.5" transform="rotate(-30 634.0 740.0)" fill="#000" /></clipPath>
<mask id="hm29" maskUnits="userSpaceOnUse" x="0" y="0" width="1353" height="1063"><rect width="1353" height="1063" fill="#fff"/><ellipse cx="639.1" cy="748.3" rx="34.2" ry="23.5" transform="rotate(-30 639.1 748.3)" fill="#000" /></mask>
<clipPath id="hc30"><ellipse cx="695.0" cy="728.0" rx="44.9" ry="9.6" transform="rotate(-45 695.0 728.0)" fill="#000" /></clipPath>
<mask id="hm30" maskUnits="userSpaceOnUse" x="0" y="0" width="1353" height="1063"><rect width="1353" height="1063" fill="#fff"/><ellipse cx="697.8" cy="730.9" rx="44.9" ry="9.6" transform="rotate(-45 697.8 730.9)" fill="#000" /></mask>
<clipPath id="hc31"><ellipse cx="566.0" cy="789.0" rx="50.3" ry="6.4" transform="rotate(-5 566.0 789.0)" fill="#000" /></clipPath>
<mask id="hm31" maskUnits="userSpaceOnUse" x="0" y="0" width="1353" height="1063"><rect width="1353" height="1063" fill="#fff"/><ellipse cx="566.6" cy="791.6" rx="50.3" ry="6.4" transform="rotate(-5 566.6 791.6)" fill="#000" /></mask>
<clipPath id="hc32"><ellipse cx="476.0" cy="797.0" rx="48.2" ry="8.6" transform="rotate(8 476.0 797.0)" fill="#000" /></clipPath>
<mask id="hm32" maskUnits="userSpaceOnUse" x="0" y="0" width="1353" height="1063"><rect width="1353" height="1063" fill="#fff"/><ellipse cx="475.6" cy="800.6" rx="48.2" ry="8.6" transform="rotate(8 475.6 800.6)" fill="#000" /></mask>
</defs>
<g filter="url(#bl1)">
<g clip-path="url(#sclip)"><path d="M789.4,525.5 L789.5,533.0 L789.5,540.5 L789.4,548.0 L789.0,555.5 L788.6,563.0 L787.9,570.5 L787.0,578.0 L786.0,585.4 L784.7,592.9 L783.3,600.3 L781.6,607.7 L779.7,615.1 L777.6,622.4 L775.3,629.6 L772.7,636.8 L769.9,643.9 L766.9,650.9 L763.7,657.8 L760.2,664.6 L756.5,671.3 L752.6,677.9 L748.5,684.3 L744.2,690.6 L739.8,696.8 L735.1,702.8 L730.2,708.7 L725.2,714.4 L720.0,720.0 L714.7,725.5 L709.3,730.8 L703.7,735.9 L697.9,740.9 L692.1,745.7 L686.1,750.4 L680.0,754.9 L673.8,759.2 L667.5,763.4 L661.1,767.5 L654.7,771.4 L648.1,775.1 L641.4,778.6 L634.7,782.0 L627.9,785.2 L621.0,788.2 L614.0,791.0 L606.9,793.6 L599.8,796.0 L592.6,798.3 L585.4,800.3 L578.1,802.1 L570.8,803.7 L563.4,805.0 L556.0,806.2 L548.6,807.1 L541.2,807.8 L533.7,808.3 L526.3,808.6 L518.8,808.7 L511.4,808.6 L504.0,808.2 L496.6,807.7 L489.2,807.0 L481.9,806.1 L474.6,805.0 L467.4,803.8 L460.1,802.4 L453.0,800.9 L445.8,799.3 L438.7,797.5 L431.6,795.6 L424.6,793.6 L417.6,791.5 L410.6,789.2 L403.7,786.9 L396.8,784.4 L389.9,781.8 L383.0,779.1 L376.2,776.3 L369.4,773.4 L362.6,770.3 L355.9,767.1 L349.2,763.8 L342.6,760.3 L336.1,756.7 L329.6,752.8 L323.2,748.8 L316.8,744.6 L310.6,740.3 L304.5,735.7 L298.6,730.9 L292.8,725.9 L287.1,720.8 L281.7,715.4 L276.4,709.8 L271.3,704.0 L266.5,698.1 L261.9,691.9 L257.5,685.6 L253.3,679.1 L249.4,672.5 L245.8,665.7 L242.4,658.8 L239.2,651.8 L236.3,644.7 L233.7,637.5 L231.3,630.2 L229.1,622.8 L227.2,615.4 L225.5,608.0 L224.0,600.5 L222.7,593.0 L221.7,585.5 L220.7,578.0 L220.0,570.5 L219.4,563.0 L219.0,555.5 L218.8,547.9 L218.7,540.5 L218.7,533.0 L218.8,525.5 L219.1,518.0 L219.5,510.6 L220.1,503.2 L220.8,495.7 L221.6,488.3 L222.5,480.9 L223.6,473.5 L224.9,466.2 L226.3,458.8 L227.8,451.5 L229.6,444.2 L231.5,437.0 L233.6,429.7 L235.8,422.6 L238.3,415.5 L241.0,408.4 L243.9,401.4 L247.0,394.5 L250.2,387.7 L253.7,381.0 L257.4,374.4 L261.4,367.9 L265.5,361.6 L269.8,355.3 L274.3,349.2 L279.0,343.3 L283.9,337.5 L288.9,331.8 L294.1,326.3 L299.5,321.0 L305.0,315.8 L310.7,310.8 L316.5,306.0 L322.5,301.4 L328.6,296.9 L334.7,292.5 L341.0,288.4 L347.4,284.4 L353.9,280.6 L360.5,277.0 L367.2,273.5 L373.9,270.2 L380.7,267.1 L387.6,264.1 L394.6,261.4 L401.6,258.8 L408.7,256.4 L415.8,254.1 L423.0,252.0 L430.2,250.1 L437.5,248.4 L444.8,246.9 L452.1,245.6 L459.5,244.4 L466.9,243.4 L474.3,242.6 L481.7,242.0 L489.1,241.6 L496.6,241.3 L504.0,241.3 L511.4,241.4 L518.9,241.7 L526.3,242.1 L533.7,242.7 L541.1,243.6 L548.5,244.5 L555.9,245.7 L563.2,247.0 L570.5,248.5 L577.8,250.1 L585.0,251.9 L592.3,253.9 L599.4,256.0 L606.6,258.3 L613.6,260.8 L620.7,263.4 L627.7,266.2 L634.6,269.2 L641.4,272.4 L648.2,275.7 L654.9,279.3 L661.5,283.0 L668.0,286.9 L674.4,291.0 L680.7,295.3 L686.8,299.7 L692.8,304.4 L698.7,309.3 L704.4,314.3 L710.0,319.5 L715.4,324.9 L720.6,330.5 L725.6,336.3 L730.4,342.2 L735.0,348.2 L739.4,354.5 L743.6,360.8 L747.6,367.3 L751.4,373.9 L755.0,380.6 L758.4,387.4 L761.5,394.3 L764.5,401.3 L767.3,408.3 L769.8,415.4 L772.2,422.5 L774.4,429.7 L776.5,437.0 L778.4,444.2 L780.1,451.5 L781.6,458.8 L783.0,466.2 L784.3,473.5 L785.5,480.9 L786.4,488.3 L787.3,495.7 L788.0,503.1 L788.6,510.6 L789.1,518.0 Z" fill="url(#bshell)" mask="url(#mback)"/>
<g clip-path="url(#hc0)"><rect x="348" y="188" width="160" height="160" fill="#b0b0b0" mask="url(#hm0)"/></g>
<g clip-path="url(#hc1)"><rect x="305" y="240" width="160" height="160" fill="#b0b0b0" mask="url(#hm1)"/></g>
<g clip-path="url(#hc2)"><rect x="228" y="257" width="160" height="160" fill="#b0b0b0" mask="url(#hm2)"/></g>
<g clip-path="url(#hc3)"><rect x="406" y="251" width="160" height="160" fill="#b0b0b0" mask="url(#hm3)"/></g>
<g clip-path="url(#hc4)"><rect x="197" y="329" width="160" height="160" fill="#b0b0b0" mask="url(#hm4)"/></g>
<g clip-path="url(#hc5)"><rect x="266" y="332" width="160" height="160" fill="#b0b0b0" mask="url(#hm5)"/></g>
<g clip-path="url(#hc6)"><rect x="367" y="343" width="160" height="160" fill="#b0b0b0" mask="url(#hm6)"/></g>
<g clip-path="url(#hc7)"><rect x="170" y="425" width="160" height="160" fill="#b0b0b0" mask="url(#hm7)"/></g>
<g clip-path="url(#hc8)"><rect x="242" y="446" width="160" height="160" fill="#b0b0b0" mask="url(#hm8)"/></g>
<g clip-path="url(#hc9)"><rect x="352" y="463" width="160" height="160" fill="#b0b0b0" mask="url(#hm9)"/></g>
<g clip-path="url(#hc10)"><rect x="173" y="527" width="160" height="160" fill="#b0b0b0" mask="url(#hm10)"/></g>
<g clip-path="url(#hc11)"><rect x="243" y="560" width="160" height="160" fill="#b0b0b0" mask="url(#hm11)"/></g>
<g clip-path="url(#hc12)"><rect x="351" y="581" width="160" height="160" fill="#b0b0b0" mask="url(#hm12)"/></g>
<g clip-path="url(#hc13)"><rect x="195" y="612" width="160" height="160" fill="#b0b0b0" mask="url(#hm13)"/></g>
<g clip-path="url(#hc14)"><rect x="261" y="645" width="160" height="160" fill="#b0b0b0" mask="url(#hm14)"/></g>
<g clip-path="url(#hc15)"><rect x="364" y="670" width="160" height="160" fill="#b0b0b0" mask="url(#hm15)"/></g>
<g clip-path="url(#hc16)"><rect x="453" y="196" width="160" height="160" fill="#b0b0b0" mask="url(#hm16)"/></g>
<g clip-path="url(#hc17)"><rect x="555" y="242" width="160" height="160" fill="#b0b0b0" mask="url(#hm17)"/></g>
<g clip-path="url(#hc18)"><rect x="506" y="284" width="160" height="160" fill="#b0b0b0" mask="url(#hm18)"/></g>
<g clip-path="url(#hc19)"><rect x="629" y="326" width="160" height="160" fill="#b0b0b0" mask="url(#hm19)"/></g>
<g clip-path="url(#hc20)"><rect x="477" y="363" width="160" height="160" fill="#b0b0b0" mask="url(#hm20)"/></g>
<g clip-path="url(#hc21)"><rect x="568" y="357" width="160" height="160" fill="#b0b0b0" mask="url(#hm21)"/></g>
<g clip-path="url(#hc22)"><rect x="661" y="440" width="160" height="160" fill="#b0b0b0" mask="url(#hm22)"/></g>
<g clip-path="url(#hc23)"><rect x="585" y="465" width="160" height="160" fill="#b0b0b0" mask="url(#hm23)"/></g>
<g clip-path="url(#hc24)"><rect x="476" y="474" width="160" height="160" fill="#b0b0b0" mask="url(#hm24)"/></g>
<g clip-path="url(#hc25)"><rect x="471" y="587" width="160" height="160" fill="#b0b0b0" mask="url(#hm25)"/></g>
<g clip-path="url(#hc26)"><rect x="581" y="577" width="160" height="160" fill="#b0b0b0" mask="url(#hm26)"/></g>
<g clip-path="url(#hc27)"><rect x="655" y="550" width="160" height="160" fill="#b0b0b0" mask="url(#hm27)"/></g>
<g clip-path="url(#hc28)"><rect x="467" y="668" width="160" height="160" fill="#b0b0b0" mask="url(#hm28)"/></g>
<g clip-path="url(#hc29)"><rect x="554" y="660" width="160" height="160" fill="#b0b0b0" mask="url(#hm29)"/></g>
<g clip-path="url(#hc30)"><rect x="615" y="648" width="160" height="160" fill="#b0b0b0" mask="url(#hm30)"/></g>
<g clip-path="url(#hc31)"><rect x="486" y="709" width="160" height="160" fill="#b0b0b0" mask="url(#hm31)"/></g>
<g clip-path="url(#hc32)"><rect x="396" y="717" width="160" height="160" fill="#b0b0b0" mask="url(#hm32)"/></g>
</g>
<g mask="url(#mfront)"><path d="M789.4,525.5 L789.5,533.0 L789.5,540.5 L789.4,548.0 L789.0,555.5 L788.6,563.0 L787.9,570.5 L787.0,578.0 L786.0,585.4 L784.7,592.9 L783.3,600.3 L781.6,607.7 L779.7,615.1 L777.6,622.4 L775.3,629.6 L772.7,636.8 L769.9,643.9 L766.9,650.9 L763.7,657.8 L760.2,664.6 L756.5,671.3 L752.6,677.9 L748.5,684.3 L744.2,690.6 L739.8,696.8 L735.1,702.8 L730.2,708.7 L725.2,714.4 L720.0,720.0 L714.7,725.5 L709.3,730.8 L703.7,735.9 L697.9,740.9 L692.1,745.7 L686.1,750.4 L680.0,754.9 L673.8,759.2 L667.5,763.4 L661.1,767.5 L654.7,771.4 L648.1,775.1 L641.4,778.6 L634.7,782.0 L627.9,785.2 L621.0,788.2 L614.0,791.0 L606.9,793.6 L599.8,796.0 L592.6,798.3 L585.4,800.3 L578.1,802.1 L570.8,803.7 L563.4,805.0 L556.0,806.2 L548.6,807.1 L541.2,807.8 L533.7,808.3 L526.3,808.6 L518.8,808.7 L511.4,808.6 L504.0,808.2 L496.6,807.7 L489.2,807.0 L481.9,806.1 L474.6,805.0 L467.4,803.8 L460.1,802.4 L453.0,800.9 L445.8,799.3 L438.7,797.5 L431.6,795.6 L424.6,793.6 L417.6,791.5 L410.6,789.2 L403.7,786.9 L396.8,784.4 L389.9,781.8 L383.0,779.1 L376.2,776.3 L369.4,773.4 L362.6,770.3 L355.9,767.1 L349.2,763.8 L342.6,760.3 L336.1,756.7 L329.6,752.8 L323.2,748.8 L316.8,744.6 L310.6,740.3 L304.5,735.7 L298.6,730.9 L292.8,725.9 L287.1,720.8 L281.7,715.4 L276.4,709.8 L271.3,704.0 L266.5,698.1 L261.9,691.9 L257.5,685.6 L253.3,679.1 L249.4,672.5 L245.8,665.7 L242.4,658.8 L239.2,651.8 L236.3,644.7 L233.7,637.5 L231.3,630.2 L229.1,622.8 L227.2,615.4 L225.5,608.0 L224.0,600.5 L222.7,593.0 L221.7,585.5 L220.7,578.0 L220.0,570.5 L219.4,563.0 L219.0,555.5 L218.8,547.9 L218.7,540.5 L218.7,533.0 L218.8,525.5 L219.1,518.0 L219.5,510.6 L220.1,503.2 L220.8,495.7 L221.6,488.3 L222.5,480.9 L223.6,473.5 L224.9,466.2 L226.3,458.8 L227.8,451.5 L229.6,444.2 L231.5,437.0 L233.6,429.7 L235.8,422.6 L238.3,415.5 L241.0,408.4 L243.9,401.4 L247.0,394.5 L250.2,387.7 L253.7,381.0 L257.4,374.4 L261.4,367.9 L265.5,361.6 L269.8,355.3 L274.3,349.2 L279.0,343.3 L283.9,337.5 L288.9,331.8 L294.1,326.3 L299.5,321.0 L305.0,315.8 L310.7,310.8 L316.5,306.0 L322.5,301.4 L328.6,296.9 L334.7,292.5 L341.0,288.4 L347.4,284.4 L353.9,280.6 L360.5,277.0 L367.2,273.5 L373.9,270.2 L380.7,267.1 L387.6,264.1 L394.6,261.4 L401.6,258.8 L408.7,256.4 L415.8,254.1 L423.0,252.0 L430.2,250.1 L437.5,248.4 L444.8,246.9 L452.1,245.6 L459.5,244.4 L466.9,243.4 L474.3,242.6 L481.7,242.0 L489.1,241.6 L496.6,241.3 L504.0,241.3 L511.4,241.4 L518.9,241.7 L526.3,242.1 L533.7,242.7 L541.1,243.6 L548.5,244.5 L555.9,245.7 L563.2,247.0 L570.5,248.5 L577.8,250.1 L585.0,251.9 L592.3,253.9 L599.4,256.0 L606.6,258.3 L613.6,260.8 L620.7,263.4 L627.7,266.2 L634.6,269.2 L641.4,272.4 L648.2,275.7 L654.9,279.3 L661.5,283.0 L668.0,286.9 L674.4,291.0 L680.7,295.3 L686.8,299.7 L692.8,304.4 L698.7,309.3 L704.4,314.3 L710.0,319.5 L715.4,324.9 L720.6,330.5 L725.6,336.3 L730.4,342.2 L735.0,348.2 L739.4,354.5 L743.6,360.8 L747.6,367.3 L751.4,373.9 L755.0,380.6 L758.4,387.4 L761.5,394.3 L764.5,401.3 L767.3,408.3 L769.8,415.4 L772.2,422.5 L774.4,429.7 L776.5,437.0 L778.4,444.2 L780.1,451.5 L781.6,458.8 L783.0,466.2 L784.3,473.5 L785.5,480.9 L786.4,488.3 L787.3,495.7 L788.0,503.1 L788.6,510.6 L789.1,518.0 Z" fill="url(#shell)"/>
<g clip-path="url(#sclip)" filter="url(#bl2)">
<ellipse cx="428.0" cy="268.0" rx="47.1" ry="11.8" transform="rotate(-10 428.0 268.0)" fill="none" stroke="#5e5e5e" stroke-width="5" stroke-opacity="0.85"/>
<ellipse cx="385.0" cy="320.0" rx="46.0" ry="30.0" transform="rotate(-18 385.0 320.0)" fill="none" stroke="#5e5e5e" stroke-width="5" stroke-opacity="0.85"/>
<ellipse cx="308.0" cy="337.0" rx="32.1" ry="11.8" transform="rotate(-45 308.0 337.0)" fill="none" stroke="#5e5e5e" stroke-width="5" stroke-opacity="0.85"/>
<ellipse cx="486.0" cy="331.0" rx="52.4" ry="33.2" transform="rotate(0 486.0 331.0)" fill="none" stroke="#5e5e5e" stroke-width="5" stroke-opacity="0.85"/>
<ellipse cx="277.0" cy="409.0" rx="22.5" ry="36.4" transform="rotate(25 277.0 409.0)" fill="none" stroke="#5e5e5e" stroke-width="5" stroke-opacity="0.85"/>
<ellipse cx="346.0" cy="412.0" rx="42.8" ry="46.0" transform="rotate(0 346.0 412.0)" fill="none" stroke="#5e5e5e" stroke-width="5" stroke-opacity="0.85"/>
<ellipse cx="447.0" cy="423.0" rx="48.2" ry="49.2" transform="rotate(0 447.0 423.0)" fill="none" stroke="#5e5e5e" stroke-width="5" stroke-opacity="0.85"/>
<ellipse cx="250.0" cy="505.0" rx="18.2" ry="48.2" transform="rotate(5 250.0 505.0)" fill="none" stroke="#5e5e5e" stroke-width="5" stroke-opacity="0.85"/>
<ellipse cx="322.0" cy="526.0" rx="40.7" ry="52.4" transform="rotate(10 322.0 526.0)" fill="none" stroke="#5e5e5e" stroke-width="5" stroke-opacity="0.85"/>
<ellipse cx="432.0" cy="543.0" rx="53.5" ry="55.6" transform="rotate(0 432.0 543.0)" fill="none" stroke="#5e5e5e" stroke-width="5" stroke-opacity="0.85"/>
<ellipse cx="253.0" cy="607.0" rx="18.2" ry="44.9" transform="rotate(-15 253.0 607.0)" fill="none" stroke="#5e5e5e" stroke-width="5" stroke-opacity="0.85"/>
<ellipse cx="323.0" cy="640.0" rx="40.7" ry="48.2" transform="rotate(-20 323.0 640.0)" fill="none" stroke="#5e5e5e" stroke-width="5" stroke-opacity="0.85"/>
<ellipse cx="431.0" cy="661.0" rx="53.5" ry="46.0" transform="rotate(0 431.0 661.0)" fill="none" stroke="#5e5e5e" stroke-width="5" stroke-opacity="0.85"/>
<ellipse cx="275.0" cy="692.0" rx="12.8" ry="42.8" transform="rotate(-40 275.0 692.0)" fill="none" stroke="#5e5e5e" stroke-width="5" stroke-opacity="0.85"/>
<ellipse cx="341.0" cy="725.0" rx="40.7" ry="27.8" transform="rotate(30 341.0 725.0)" fill="none" stroke="#5e5e5e" stroke-width="5" stroke-opacity="0.85"/>
<ellipse cx="444.0" cy="750.0" rx="50.3" ry="26.8" transform="rotate(15 444.0 750.0)" fill="none" stroke="#5e5e5e" stroke-width="5" stroke-opacity="0.85"/>
<ellipse cx="533.0" cy="276.0" rx="52.4" ry="16.1" transform="rotate(5 533.0 276.0)" fill="none" stroke="#5e5e5e" stroke-width="5" stroke-opacity="0.85"/>
<ellipse cx="635.0" cy="322.0" rx="47.1" ry="28.9" transform="rotate(25 635.0 322.0)" fill="none" stroke="#5e5e5e" stroke-width="5" stroke-opacity="0.85"/>
<ellipse cx="586.0" cy="364.0" rx="42.8" ry="32.1" transform="rotate(8 586.0 364.0)" fill="none" stroke="#5e5e5e" stroke-width="5" stroke-opacity="0.85"/>
<ellipse cx="709.0" cy="406.0" rx="30.0" ry="49.2" transform="rotate(-20 709.0 406.0)" fill="none" stroke="#5e5e5e" stroke-width="5" stroke-opacity="0.85"/>
<ellipse cx="557.0" cy="443.0" rx="41.7" ry="42.8" transform="rotate(0 557.0 443.0)" fill="none" stroke="#5e5e5e" stroke-width="5" stroke-opacity="0.85"/>
<ellipse cx="648.0" cy="437.0" rx="33.2" ry="42.8" transform="rotate(5 648.0 437.0)" fill="none" stroke="#5e5e5e" stroke-width="5" stroke-opacity="0.85"/>
<ellipse cx="741.0" cy="520.0" rx="21.4" ry="55.6" transform="rotate(-10 741.0 520.0)" fill="none" stroke="#5e5e5e" stroke-width="5" stroke-opacity="0.85"/>
<ellipse cx="665.0" cy="545.0" rx="39.6" ry="53.5" transform="rotate(0 665.0 545.0)" fill="none" stroke="#5e5e5e" stroke-width="5" stroke-opacity="0.85"/>
<ellipse cx="556.0" cy="554.0" rx="53.5" ry="54.6" transform="rotate(0 556.0 554.0)" fill="none" stroke="#5e5e5e" stroke-width="5" stroke-opacity="0.85"/>
<ellipse cx="551.0" cy="667.0" rx="52.4" ry="43.9" transform="rotate(0 551.0 667.0)" fill="none" stroke="#5e5e5e" stroke-width="5" stroke-opacity="0.85"/>
<ellipse cx="661.0" cy="657.0" rx="41.7" ry="44.9" transform="rotate(-10 661.0 657.0)" fill="none" stroke="#5e5e5e" stroke-width="5" stroke-opacity="0.85"/>
<ellipse cx="735.0" cy="630.0" rx="26.8" ry="53.5" transform="rotate(25 735.0 630.0)" fill="none" stroke="#5e5e5e" stroke-width="5" stroke-opacity="0.85"/>
<ellipse cx="547.0" cy="748.0" rx="40.7" ry="21.4" transform="rotate(-3 547.0 748.0)" fill="none" stroke="#5e5e5e" stroke-width="5" stroke-opacity="0.85"/>
<ellipse cx="634.0" cy="740.0" rx="34.2" ry="23.5" transform="rotate(-30 634.0 740.0)" fill="none" stroke="#5e5e5e" stroke-width="5" stroke-opacity="0.85"/>
<ellipse cx="695.0" cy="728.0" rx="44.9" ry="9.6" transform="rotate(-45 695.0 728.0)" fill="none" stroke="#5e5e5e" stroke-width="5" stroke-opacity="0.85"/>
<ellipse cx="566.0" cy="789.0" rx="50.3" ry="6.4" transform="rotate(-5 566.0 789.0)" fill="none" stroke="#5e5e5e" stroke-width="5" stroke-opacity="0.85"/>
<ellipse cx="476.0" cy="797.0" rx="48.2" ry="8.6" transform="rotate(8 476.0 797.0)" fill="none" stroke="#5e5e5e" stroke-width="5" stroke-opacity="0.85"/>
</g></g>
<path d="M634 279 Q680 296 716 327 M725 343 Q752 378 770 426 M777 446 Q784 490 784 540" stroke="#777777" stroke-width="2.5" fill="none" stroke-linecap="round" stroke-opacity="0.8"/>
</g>
<circle cx="496" cy="521" r="3.5" fill="#d08a3a" stroke="#5a3a20" stroke-width="1.2"/>
</svg>
<div style="position:absolute;left:0px;top:1068px;width:1353px;height:12px;background:#2c2c2c;border-top-right-radius:6px"></div>
<div style="position:absolute;left:69px;top:1075px;width:35px;height:5px;background:#4a4a4a;border-radius:5px 0 0 0"></div>
<div style="position:absolute;left:104px;top:1075px;width:36px;height:5px;background:#3a3a3a;border-radius:0 5px 0 0"></div>
<div style="position:absolute;left:150px;top:1075px;width:36px;height:5px;background:#4a4a4a;border-radius:5px 0 0 0"></div>
<div style="position:absolute;left:187px;top:1075px;width:35px;height:5px;background:#4a4a4a;border-radius:0"></div>
<div style="position:absolute;left:223px;top:1075px;width:36px;height:5px;background:#4a4a4a;border-radius:0"></div>
<div style="position:absolute;left:260px;top:1075px;width:35px;height:5px;background:#4a4a4a;border-radius:0"></div>
<div style="position:absolute;left:296px;top:1075px;width:35px;height:5px;background:#4a4a4a;border-radius:0"></div>
<div style="position:absolute;left:332px;top:1075px;width:35px;height:5px;background:#4a4a4a;border-radius:0 5px 0 0"></div>
<div style="position:absolute;left:841px;top:1075px;width:132px;height:5px;background:#4a4a4a;border-radius:5px 5px 0 0"></div>
<div style="position:absolute;left:984px;top:1075px;width:34px;height:5px;background:#4a4a4a;border-radius:5px 0 0 0"></div>
<div style="position:absolute;left:1019px;top:1075px;width:157px;height:5px;background:#4a4a4a;"></div>
<div style="position:absolute;left:1177px;top:1075px;width:160px;height:5px;background:#4a4a4a;border-radius:0 5px 0 0"></div>
<div style="position:absolute;left:995px;top:1073px;width:12px;height:5px;background:#dddddd;"></div>
<div style="position:absolute;left:1357px;top:0px;width:563px;height:37px;background:#303030;"></div>
<div style="position:absolute;left:1353px;top:0px;width:4px;height:1080px;background:#161616;"></div>
<div style="position:absolute;left:1357px;top:37px;width:51px;height:1043px;background:#1f1f1f;"></div>
<div style="position:absolute;left:1408px;top:37px;width:512px;height:1043px;background:#2c2c2c;"></div>
<div style="position:absolute;left:1915px;top:55px;width:5px;height:1025px;background:#353535;"></div>
<div style="position:absolute;left:1374px;top:0px;width:54px;height:30px;background:#262626;border-radius:0 0 6px 6px"></div>
<div style="position:absolute;left:1536px;top:0px;width:207px;height:30px;background:#1d1d1d;border-radius:0 0 7px 7px"></div>
<div style="position:absolute;left:1878px;top:0px;width:32px;height:30px;background:#262626;border-radius:0 0 6px 6px"></div>
<div style="position:absolute;left:1361px;top:501px;width:47px;height:51px;background:#2c2c2c;border-radius:7px 0 0 7px"></div>
<div class="t" style="left:1470px;top:59.2px;font-size:21px;line-height:21px;color:#e2e2e2;">Cube</div>
<div class="t" style="left:1620px;top:59.2px;font-size:21px;line-height:21px;color:#e2e2e2;">Subdivision</div>
<div style="position:absolute;left:1424px;top:119px;width:486px;height:33px;background:#222222;border-radius:6px"></div>
<div class="t" style="left:1438px;top:125.2px;font-size:21px;line-height:21px;color:#e6e6e6;">Add Modifier</div>
<div style="position:absolute;left:1424px;top:171px;width:487px;height:284px;background:#3a3a3a;border-radius:8px;box-shadow:inset 2px 0 0 0 #7a7a7a,inset -2px 0 0 0 #5a5a5a,inset 0 0 0 2px #4b5d78"></div>
<div style="position:absolute;left:1424px;top:459px;width:487px;height:483px;background:#393939;border-radius:8px"></div>
<div style="position:absolute;left:1424px;top:946px;width:487px;height:144px;background:#393939;border-radius:8px"></div>
<div style="position:absolute;left:1512px;top:179px;width:126px;height:33px;background:#1e1e1e;border-radius:6px 0 0 6px"></div>
<div class="t" style="left:1526px;top:184.2px;font-size:21px;line-height:21px;color:#e6e6e6;">Subdivision</div>
<div style="position:absolute;left:1638px;top:179px;width:36px;height:33px;background:#545454;"></div>
<div style="position:absolute;left:1675px;top:179px;width:36px;height:33px;background:#4772b3;"></div>
<div style="position:absolute;left:1712px;top:179px;width:36px;height:33px;background:#4772b3;"></div>
<div style="position:absolute;left:1749px;top:179px;width:36px;height:33px;background:#4772b3;"></div>
<div style="position:absolute;left:1785px;top:179px;width:35px;height:33px;background:#262626;border-radius:0 6px 6px 0"></div>
<div style="position:absolute;left:1512px;top:466px;width:162px;height:33px;background:#1e1e1e;border-radius:6px 0 0 6px"></div>
<div class="t" style="left:1526px;top:471.2px;font-size:21px;line-height:21px;color:#e6e6e6;">Bevel</div>
<div style="position:absolute;left:1675px;top:466px;width:36px;height:33px;background:#4772b3;"></div>
<div style="position:absolute;left:1712px;top:466px;width:36px;height:33px;background:#4772b3;"></div>
<div style="position:absolute;left:1749px;top:466px;width:36px;height:33px;background:#4772b3;"></div>
<div style="position:absolute;left:1785px;top:466px;width:35px;height:33px;background:#262626;border-radius:0 6px 6px 0"></div>
<div style="position:absolute;left:1512px;top:952px;width:162px;height:33px;background:#1e1e1e;border-radius:6px 0 0 6px"></div>
<div class="t" style="left:1526px;top:957.2px;font-size:21px;line-height:21px;color:#e6e6e6;">Wireframe</div>
<div style="position:absolute;left:1675px;top:952px;width:36px;height:33px;background:#545454;"></div>
<div style="position:absolute;left:1712px;top:952px;width:36px;height:33px;background:#4772b3;"></div>
<div style="position:absolute;left:1749px;top:952px;width:36px;height:33px;background:#4772b3;"></div>
<div style="position:absolute;left:1785px;top:952px;width:35px;height:33px;background:#262626;border-radius:0 6px 6px 0"></div>
<div style="position:absolute;left:1438px;top:233px;width:228px;height:34px;background:#4772b3;border-radius:6px 0 0 6px"></div>
<div style="position:absolute;left:1666px;top:233px;width:230px;height:34px;background:#545454;border-radius:0 6px 6px 0"></div>
<div class="t" style="left:1352px;width:400px;top:239.2px;font-size:21px;line-height:21px;color:#ffffff;text-align:center;">Catmull-Clark</div>
<div class="t" style="left:1581px;width:400px;top:239.2px;font-size:21px;line-height:21px;color:#e6e6e6;text-align:center;">Simple</div>
<div style="position:absolute;left:1438px;top:519px;width:228px;height:34px;background:#545454;border-radius:6px 0 0 6px"></div>
<div style="position:absolute;left:1666px;top:519px;width:230px;height:34px;background:#4772b3;border-radius:0 6px 6px 0"></div>
<div class="t" style="left:1352px;width:400px;top:525.2px;font-size:21px;line-height:21px;color:#e6e6e6;text-align:center;">Vertices</div>
<div class="t" style="left:1581px;width:400px;top:525.2px;font-size:21px;line-height:21px;color:#ffffff;text-align:center;">Edges</div>
<div class="t" style="right:320px;top:284.2px;font-size:21px;line-height:21px;color:#d6d6d6;text-align:right;">Levels Viewport</div>
<div style="position:absolute;left:1617px;top:277px;width:242px;height:34px;background:#545454;border-radius:6px 6px 0 0"></div>
<div class="t" style="left:1537px;width:400px;top:284.2px;font-size:21px;line-height:21px;color:#e6e6e6;text-align:center;">2</div>
<div style="position:absolute;left:1875.5px;top:290.5px;width:7px;height:7px;border-radius:50%;background:#d0d0d0"></div>
<div class="t" style="right:320px;top:320.2px;font-size:21px;line-height:21px;color:#d6d6d6;text-align:right;">Render</div>
<div style="position:absolute;left:1617px;top:312px;width:242px;height:36px;background:#545454;border-radius:0 0 6px 6px"></div>
<div class="t" style="left:1537px;width:400px;top:320.2px;font-size:21px;line-height:21px;color:#e6e6e6;text-align:center;">2</div>
<div style="position:absolute;left:1875.5px;top:327.5px;width:7px;height:7px;border-radius:50%;background:#d0d0d0"></div>
<div style="position:absolute;left:1617px;top:364px;width:25px;height:25px;background:#4772b3;border-radius:4px"></div>
<div class="t" style="left:1648px;top:366.2px;font-size:21px;line-height:21px;color:#e6e6e6;">Optimal Display</div>
<div style="position:absolute;left:1875.5px;top:372.5px;width:7px;height:7px;border-radius:50%;background:#d0d0d0"></div>
<div class="t" style="left:1487px;top:423.2px;font-size:21px;line-height:21px;color:#e0e0e0;">Advanced</div>
<div class="t" style="right:320px;top:571.2px;font-size:21px;line-height:21px;color:#d6d6d6;text-align:right;">Width Type</div>
<div style="position:absolute;left:1617px;top:565px;width:242px;height:33px;background:#222222;border-radius:6px"></div>
<div class="t" style="left:1630px;top:571.2px;font-size:21px;line-height:21px;color:#e6e6e6;">Offset</div>
<div style="position:absolute;left:1875.5px;top:577.5px;width:7px;height:7px;border-radius:50%;background:#d0d0d0"></div>
<div class="t" style="right:320px;top:610.2px;font-size:21px;line-height:21px;color:#d6d6d6;text-align:right;">Amount</div>
<div style="position:absolute;left:1617px;top:604px;width:242px;height:34px;background:#545454;border-radius:6px"></div>
<div class="t" style="left:1537px;width:400px;top:610.2px;font-size:21px;line-height:21px;color:#e6e6e6;text-align:center;">0.1 m</div>
<div style="position:absolute;left:1875.5px;top:616.5px;width:7px;height:7px;border-radius:50%;background:#d0d0d0"></div>
<div class="t" style="right:320px;top:655.2px;font-size:21px;line-height:21px;color:#d6d6d6;text-align:right;">Segments</div>
<div style="position:absolute;left:1617px;top:649px;width:242px;height:35px;background:#545454;border-radius:6px"></div>
<div class="t" style="left:1537px;width:400px;top:655.2px;font-size:21px;line-height:21px;color:#e6e6e6;text-align:center;">1</div>
<div style="position:absolute;left:1875.5px;top:661.5px;width:7px;height:7px;border-radius:50%;background:#d0d0d0"></div>
<div class="t" style="right:320px;top:720.2px;font-size:21px;line-height:21px;color:#d6d6d6;text-align:right;">Limit Method</div>
<div style="position:absolute;left:1617px;top:714px;width:242px;height:33px;background:#222222;border-radius:6px"></div>
<div class="t" style="left:1630px;top:720.2px;font-size:21px;line-height:21px;color:#e6e6e6;">Angle</div>
<div style="position:absolute;left:1875.5px;top:726.5px;width:7px;height:7px;border-radius:50%;background:#d0d0d0"></div>
<div class="t" style="right:320px;top:762.2px;font-size:21px;line-height:21px;color:#d6d6d6;text-align:right;">Angle</div>
<div style="position:absolute;left:1617px;top:756px;width:242px;height:34px;background:#545454;border-radius:6px"></div>
<div class="t" style="left:1537px;width:400px;top:762.2px;font-size:21px;line-height:21px;color:#e6e6e6;text-align:center;">30°</div>
<div style="position:absolute;left:1875.5px;top:768.5px;width:7px;height:7px;border-radius:50%;background:#d0d0d0"></div>
<div class="t" style="left:1487px;top:819.2px;font-size:21px;line-height:21px;color:#e0e0e0;">Profile</div>
<div class="t" style="left:1487px;top:864.2px;font-size:21px;line-height:21px;color:#e0e0e0;">Geometry</div>
<div class="t" style="left:1487px;top:909.2px;font-size:21px;line-height:21px;color:#e0e0e0;">Shading</div>
<div class="t" style="right:320px;top:1012.2px;font-size:21px;line-height:21px;color:#d6d6d6;text-align:right;">Thickness</div>
<div style="position:absolute;left:1617px;top:1006px;width:242px;height:34px;background:#545454;border-radius:6px"></div>
<div class="t" style="left:1537px;width:400px;top:1012.2px;font-size:21px;line-height:21px;color:#e6e6e6;text-align:center;">0.0587 m</div>
<div style="position:absolute;left:1875.5px;top:1018.5px;width:7px;height:7px;border-radius:50%;background:#d0d0d0"></div>
<div class="t" style="right:320px;top:1057.2px;font-size:21px;line-height:21px;color:#d6d6d6;text-align:right;">Offset</div>
<div style="position:absolute;left:1617px;top:1051px;width:242px;height:39px;background:#545454;border-radius:6px"></div>
<div style="position:absolute;left:1617px;top:1051px;width:120px;height:39px;background:#4772b3;border-radius:6px 0 0 6px"></div>
<div class="t" style="left:1537px;width:400px;top:1057.2px;font-size:21px;line-height:21px;color:#e6e6e6;text-align:center;">0.0000</div>
<div style="position:absolute;left:1875.5px;top:1063.5px;width:7px;height:7px;border-radius:50%;background:#d0d0d0"></div>
<svg width="1920" height="1080" viewBox="0 0 1920 1080" style="position:absolute;left:0;top:0"><circle cx="1230" cy="5" r="16" fill="#4f7a2e" stroke="#7aa84c" stroke-width="2.2"/>
<circle cx="1311" cy="-2" r="16" fill="#d03a5a"/>
<path d="M1305 -3 L1317 7 M1317 -3 L1305 7" stroke="#5a1a28" stroke-width="2"/>
<circle cx="1263" cy="47" r="14" fill="#3d5478" stroke="#4c7cc8" stroke-width="2.2"/>
<circle cx="1312" cy="90" r="25" fill="#262626" fill-opacity="0.8"/>
<circle cx="1312" cy="145" r="25" fill="#262626" fill-opacity="0.8"/>
<circle cx="1312" cy="200" r="25" fill="#262626" fill-opacity="0.8"/>
<circle cx="1312" cy="255" r="25" fill="#262626" fill-opacity="0.8"/>
<circle cx="1315" cy="88" r="10.5" fill="#e8e8e8"/><path d="M1310 92 L1302 100" stroke="#e8e8e8" stroke-width="4" stroke-linecap="round"/><path d="M1315 82 V94 M1309 88 H1321" stroke="#333" stroke-width="1.8"/>
<path d="M1300 146 Q1296 140 1300 139 Q1304 140 1307 146 L1306 131 Q1307 128 1309 131 L1310 143 L1311 128 Q1313 125 1315 128 L1315 143 L1318 130 Q1320 127 1322 130 L1321 145 L1324 136 Q1326 134 1327 137 L1324 152 Q1321 159 1313 159 Q1306 159 1300 146 Z" fill="#e8e8e8"/>
<circle cx="1303" cy="194" r="6" fill="#e8e8e8"/><circle cx="1316" cy="192" r="7" fill="#e8e8e8"/><rect x="1301" y="200" width="18" height="13" fill="#e8e8e8"/><path d="M1319 206 L1326 201 V213 Z" fill="#e8e8e8"/><rect x="1298" y="204" width="3" height="5" fill="#e8e8e8"/><circle cx="1303" cy="194" r="2" fill="#555"/><circle cx="1316" cy="192" r="2" fill="#555"/>
<path d="M1303 243 H1321 L1326 268 H1298 Z M1309 243 L1307 268 M1315 243 L1317 268 M1301 252 H1323 M1299.5 260 H1324.5" stroke="#e8e8e8" stroke-width="2.5" fill="none"/>
<path d="M1173 806 H1215 Q1228 808 1229 823 V866 Q1228 894 1194 895 Q1160 894 1159 866 V823 Q1160 808 1173 806 Z M1160 849 H1228 M1183 807 V848 M1205 807 V848" stroke="#ffffff" stroke-width="2.6" fill="none"/>
<rect x="1381" y="2" width="27" height="10" rx="5" fill="#e0e0e0"/><rect x="1393" y="4.5" width="12" height="5" fill="#262626"/>
<rect x="1381" y="16" width="27" height="10" rx="5" fill="#e0e0e0"/><rect x="1398" y="18.5" width="7" height="5" fill="#262626"/>
<path d="M1413 12 L1418 17 L1423 12" stroke="#e0e0e0" stroke-width="1.8" fill="none"/>
<circle cx="1559" cy="11" r="8" stroke="#e0e0e0" stroke-width="2" fill="none"/><path d="M1553 17 L1545 26" stroke="#e0e0e0" stroke-width="2.2" stroke-linecap="round"/>
<path d="M1888 13 L1894 19 L1900 13" stroke="#e0e0e0" stroke-width="2" fill="none"/>
<path d="M1429 63 V58 H1435 M1448 58 H1453 V63 M1453 77 V82 H1448 M1435 82 H1429 V77" stroke="#cfcfcf" stroke-width="1.8" fill="none"/><rect x="1434" y="63" width="15" height="15" fill="#e8e8e8"/>
<path d="M1550 62 L1558 70 L1550 78" stroke="#d8d8d8" stroke-width="2" fill="none"/>
<rect x="1580" y="57" width="24" height="24" stroke="#c8c8c8" stroke-width="1.6" fill="none"/><circle cx="1592" cy="69" r="9" stroke="#e8e8e8" stroke-width="2" fill="none"/>
<path d="M1897 58 L1906 67 L1901 69 L1895 75 L1894 80 L1884 70 L1889 69 L1895 63 Z M1888 76 L1880 84" stroke="#9a9a9a" stroke-width="1.8" fill="none"/>
<path d="M1893 133 L1899 139 L1905 133" stroke="#e0e0e0" stroke-width="2" fill="none"/>
<rect x="1373" y="64" width="3" height="9" fill="#b8b8b8"/><ellipse cx="1374.5" cy="82" rx="4.5" ry="6" fill="#b8b8b8"/><path d="M1387 65 Q1384 70 1389 73 V89" stroke="#b8b8b8" stroke-width="4" fill="none"/><path d="M1385 65 Q1384 72 1390 73 Q1396 72 1395 65" stroke="#b8b8b8" stroke-width="3" fill="none"/>
<rect x="1372" y="130" width="24" height="20" rx="2" stroke="#b8b8b8" stroke-width="2.5" fill="none"/><rect x="1377" y="126" width="8" height="4" fill="#b8b8b8"/><rect x="1375" y="134" width="13" height="13" fill="#666"/><circle cx="1392" cy="137" r="1.5" fill="#b8b8b8"/><circle cx="1392" cy="144" r="1.5" fill="#b8b8b8"/>
<rect x="1372" y="180" width="25" height="8" rx="2" fill="#b8b8b8"/><rect x="1376" y="188" width="17" height="16" fill="#777"/><path d="M1380 201 L1385 195 L1390 201 Z" fill="#222"/>
<path d="M1373 236 V256 H1391 M1376 233 V253 H1394" stroke="#b8b8b8" stroke-width="1.5" fill="none"/><rect x="1379" y="230" width="17" height="19" stroke="#b8b8b8" stroke-width="1.8" fill="#888"/><path d="M1381 247 L1386 236 L1392 247 Z" fill="#ddd"/>
<path d="M1378 283 L1372 296 Q1371 303 1378 303 Q1382 303 1384 299 Z" fill="#b8b8b8"/><circle cx="1390" cy="298" r="6" stroke="#b8b8b8" stroke-width="2.5" fill="#1f1f1f"/><circle cx="1392" cy="283" r="3" fill="#b8b8b8"/>
<circle cx="1384" cy="348" r="10.5" fill="#2a1a20" stroke="#b04c66" stroke-width="2"/><path d="M1376 342 Q1380 337 1386 339 Q1389 344 1384 348 Q1381 353 1378 349 Q1377 346 1376 342 Z M1384 352 Q1390 350 1391 354 Q1388 358 1384 356 Z" fill="#b04c66"/><path d="M1372 359 L1375 356 M1393 338 L1396 335" stroke="#b04c66" stroke-width="2" fill="none"/>
<rect x="1372" y="400" width="24" height="6" stroke="#e6e6e6" stroke-width="2" fill="none"/><rect x="1373" y="406" width="22" height="16" stroke="#e6e6e6" stroke-width="2" fill="none"/><rect x="1380" y="410" width="8" height="3" fill="#e6e6e6"/>
<path d="M1372 468 V464 H1376 M1392 464 H1396 V468 M1396 482 V486 H1392 M1376 486 H1372 V482" stroke="#c08050" stroke-width="1.6" fill="none"/><rect x="1376" y="468" width="16" height="14" fill="#c07a60"/>
<path d="M1374 537 L1385 525" stroke="#6a9be0" stroke-width="5" stroke-linecap="round"/><path d="M1383 520 Q1385 512 1395 514 L1390 519 L1391 523 L1395 524 L1399 519 Q1400 530 1388 529 Z" fill="#6a9be0"/>
<circle cx="1375" cy="568" r="3" fill="#6a9be0"/><circle cx="1393" cy="589" r="3" fill="#6a9be0"/><circle cx="1375" cy="588" r="2" fill="#6a9be0"/><path d="M1375 568 L1393 589 M1375 568 V588 M1378 568 H1394" stroke="#6a9be0" stroke-width="1.6" fill="none"/>
<path d="M1393 622 A11 11 0 1 0 1394 637" stroke="#6a9be0" stroke-width="2" fill="none"/><circle cx="1384" cy="628" r="4.5" fill="#6a9be0"/><circle cx="1393" cy="619" r="3" fill="#6a9be0"/>
<path d="M1376 673 Q1384 666 1394 670 Q1396 680 1386 689 Q1374 690 1374 681 Z" stroke="#6a9be0" stroke-width="2.5" fill="none"/><circle cx="1384" cy="682" r="3.5" fill="#6a9be0"/>
<path d="M1375 720 L1393 720 L1384 738 Z" stroke="#3fbf70" stroke-width="2" fill="none"/><rect x="1372" y="717" width="6" height="6" stroke="#3fbf70" stroke-width="1.6" fill="#1f1f1f"/><rect x="1390" y="717" width="6" height="6" stroke="#3fbf70" stroke-width="1.6" fill="#1f1f1f"/><rect x="1381" y="735" width="6" height="6" stroke="#3fbf70" stroke-width="1.6" fill="#1f1f1f"/>
<circle cx="1384" cy="782" r="11" fill="#b84a60" stroke="#b84a60" stroke-width="1.5"/><path d="M1384 782 V771.5 A10.5 10.5 0 0 1 1394.5 782 Z M1384 782 V792.5 A10.5 10.5 0 0 1 1373.5 782 Z" fill="#2a1a1e"/>
<rect x="1371" y="833" width="26" height="26" fill="#b84a60"/>
<rect x="1372.0" y="834.0" width="6" height="6" fill="#2a1a1e"/>
<rect x="1372.0" y="846.6" width="6" height="6" fill="#2a1a1e"/>
<rect x="1378.3" y="840.3" width="6" height="6" fill="#2a1a1e"/>
<rect x="1378.3" y="852.9" width="6" height="6" fill="#2a1a1e"/>
<rect x="1384.6" y="834.0" width="6" height="6" fill="#2a1a1e"/>
<rect x="1384.6" y="846.6" width="6" height="6" fill="#2a1a1e"/>
<rect x="1390.9" y="840.3" width="6" height="6" fill="#2a1a1e"/>
<rect x="1390.9" y="852.9" width="6" height="6" fill="#2a1a1e"/>
<path d="M1438 191 L1445 198 L1452 191" stroke="#cfcfcf" stroke-width="1.8" fill="none"/>
<rect x="1466" y="184" width="24" height="24" stroke="#bdbdbd" stroke-width="1.5" fill="none"/><circle cx="1478" cy="196" r="9" stroke="#e8e8e8" stroke-width="2" fill="none"/>
<path d="M1685 190 V202 M1688 205 H1697 M1688 187 H1695 M1700 192 V202" stroke="#e8e8e8" stroke-width="1.4" stroke-dasharray="2 1.6" fill="none"/><circle cx="1685" cy="187" r="2.8" stroke="#e8e8e8" stroke-width="1.5" fill="none"/><circle cx="1685" cy="205" r="2.8" stroke="#e8e8e8" stroke-width="1.5" fill="none"/><circle cx="1700" cy="205" r="2.8" stroke="#e8e8e8" stroke-width="1.5" fill="none"/><rect x="1696" y="183" width="8" height="8" fill="#e8e8e8"/>
<rect x="1718" y="187" width="22" height="15" rx="1.5" stroke="#f0f0f0" stroke-width="2" fill="none"/><rect x="1721" y="190" width="16" height="9" fill="#e8e8e8"/><path d="M1729 202 V206 M1723 206 H1735" stroke="#f0f0f0" stroke-width="1.8"/>
<rect x="1754" y="189" width="24" height="17" rx="2" fill="#f0f0f0"/><rect x="1759" y="186" width="10" height="4" fill="#f0f0f0"/><circle cx="1766" cy="197.5" r="6" fill="#4772b3"/><circle cx="1766" cy="197.5" r="3.5" fill="#f0f0f0"/>
<path d="M1795 192 L1802 199 L1809 192" stroke="#e0e0e0" stroke-width="2" fill="none"/>
<path d="M1833 189 L1847 203 M1847 189 L1833 203" stroke="#dcdcdc" stroke-width="2" fill="none"/>
<rect x="1878" y="190" width="3" height="3" fill="#9a9a9a"/>
<rect x="1878" y="196" width="3" height="3" fill="#9a9a9a"/>
<rect x="1884" y="190" width="3" height="3" fill="#9a9a9a"/>
<rect x="1884" y="196" width="3" height="3" fill="#9a9a9a"/>
<rect x="1890" y="190" width="3" height="3" fill="#9a9a9a"/>
<rect x="1890" y="196" width="3" height="3" fill="#9a9a9a"/>
<rect x="1896" y="190" width="3" height="3" fill="#9a9a9a"/>
<rect x="1896" y="196" width="3" height="3" fill="#9a9a9a"/>
<path d="M1656 183 L1649 187 M1649 187 L1666 187 M1649 187 L1656 206 L1666 187" stroke="#e8e8e8" stroke-width="2" fill="none"/><rect x="1644" y="183" width="7" height="7" stroke="#e8e8e8" stroke-width="1.8" fill="#545454"/><rect x="1662" y="183" width="7" height="7" stroke="#e8e8e8" stroke-width="1.8" fill="#545454"/><rect x="1653" y="201" width="7" height="7" stroke="#e8e8e8" stroke-width="1.8" fill="#545454"/>
<path d="M1438 477 L1445 484 L1452 477" stroke="#cfcfcf" stroke-width="1.8" fill="none"/>
<path d="M1466 495 V481 L1477 469 H1490 V495 Z" stroke="#e8e8e8" stroke-width="2" fill="none"/>
<path d="M1685 476 V488 M1688 491 H1697 M1688 473 H1695 M1700 478 V488" stroke="#e8e8e8" stroke-width="1.4" stroke-dasharray="2 1.6" fill="none"/><circle cx="1685" cy="473" r="2.8" stroke="#e8e8e8" stroke-width="1.5" fill="none"/><circle cx="1685" cy="491" r="2.8" stroke="#e8e8e8" stroke-width="1.5" fill="none"/><circle cx="1700" cy="491" r="2.8" stroke="#e8e8e8" stroke-width="1.5" fill="none"/><rect x="1696" y="469" width="8" height="8" fill="#e8e8e8"/>
<rect x="1718" y="473" width="22" height="15" rx="1.5" stroke="#f0f0f0" stroke-width="2" fill="none"/><rect x="1721" y="476" width="16" height="9" fill="#e8e8e8"/><path d="M1729 488 V492 M1723 492 H1735" stroke="#f0f0f0" stroke-width="1.8"/>
<rect x="1754" y="475" width="24" height="17" rx="2" fill="#f0f0f0"/><rect x="1759" y="472" width="10" height="4" fill="#f0f0f0"/><circle cx="1766" cy="483.5" r="6" fill="#4772b3"/><circle cx="1766" cy="483.5" r="3.5" fill="#f0f0f0"/>
<path d="M1795 478 L1802 485 L1809 478" stroke="#e0e0e0" stroke-width="2" fill="none"/>
<path d="M1833 475 L1847 489 M1847 475 L1833 489" stroke="#dcdcdc" stroke-width="2" fill="none"/>
<rect x="1878" y="476" width="3" height="3" fill="#9a9a9a"/>
<rect x="1878" y="482" width="3" height="3" fill="#9a9a9a"/>
<rect x="1884" y="476" width="3" height="3" fill="#9a9a9a"/>
<rect x="1884" y="482" width="3" height="3" fill="#9a9a9a"/>
<rect x="1890" y="476" width="3" height="3" fill="#9a9a9a"/>
<rect x="1890" y="482" width="3" height="3" fill="#9a9a9a"/>
<rect x="1896" y="476" width="3" height="3" fill="#9a9a9a"/>
<rect x="1896" y="482" width="3" height="3" fill="#9a9a9a"/>
<path d="M1438 964 L1445 971 L1452 964" stroke="#cfcfcf" stroke-width="1.8" fill="none"/>
<rect x="1466" y="961" width="18" height="20" rx="2" stroke="#e0e0e0" stroke-width="2" fill="none"/><path d="M1466 961 L1472 956 H1490 V976 L1484 981 M1484 961 L1490 956" stroke="#e0e0e0" stroke-width="2" fill="none"/>
<path d="M1685 963 V975 M1688 978 H1697 M1688 960 H1695 M1700 965 V975" stroke="#e8e8e8" stroke-width="1.4" stroke-dasharray="2 1.6" fill="none"/><circle cx="1685" cy="960" r="2.8" stroke="#e8e8e8" stroke-width="1.5" fill="none"/><circle cx="1685" cy="978" r="2.8" stroke="#e8e8e8" stroke-width="1.5" fill="none"/><circle cx="1700" cy="978" r="2.8" stroke="#e8e8e8" stroke-width="1.5" fill="none"/><rect x="1696" y="956" width="8" height="8" fill="#e8e8e8"/>
<rect x="1718" y="960" width="22" height="15" rx="1.5" stroke="#f0f0f0" stroke-width="2" fill="none"/><rect x="1721" y="963" width="16" height="9" fill="#e8e8e8"/><path d="M1729 975 V979 M1723 979 H1735" stroke="#f0f0f0" stroke-width="1.8"/>
<rect x="1754" y="962" width="24" height="17" rx="2" fill="#f0f0f0"/><rect x="1759" y="959" width="10" height="4" fill="#f0f0f0"/><circle cx="1766" cy="970.5" r="6" fill="#4772b3"/><circle cx="1766" cy="970.5" r="3.5" fill="#f0f0f0"/>
<path d="M1795 965 L1802 972 L1809 965" stroke="#e0e0e0" stroke-width="2" fill="none"/>
<path d="M1833 962 L1847 976 M1847 962 L1833 976" stroke="#dcdcdc" stroke-width="2" fill="none"/>
<rect x="1878" y="963" width="3" height="3" fill="#9a9a9a"/>
<rect x="1878" y="969" width="3" height="3" fill="#9a9a9a"/>
<rect x="1884" y="963" width="3" height="3" fill="#9a9a9a"/>
<rect x="1884" y="969" width="3" height="3" fill="#9a9a9a"/>
<rect x="1890" y="963" width="3" height="3" fill="#9a9a9a"/>
<rect x="1890" y="969" width="3" height="3" fill="#9a9a9a"/>
<rect x="1896" y="963" width="3" height="3" fill="#9a9a9a"/>
<rect x="1896" y="969" width="3" height="3" fill="#9a9a9a"/>
<path d="M1854 203 L1854 226 L1859 221 L1863 230 L1867 228 L1863 219 L1870 219 Z" fill="#ffffff" stroke="#111" stroke-width="1.2"/>
<path d="M1622 377 L1627 382 L1637 370" stroke="#ffffff" stroke-width="2.5" fill="none"/>
<path d="M1468 425 L1475 433 L1468 441" stroke="#cfcfcf" stroke-width="1.8" fill="none"/>
<path d="M1468 821 L1475 829 L1468 837" stroke="#cfcfcf" stroke-width="1.8" fill="none"/>
<path d="M1468 866 L1475 874 L1468 882" stroke="#cfcfcf" stroke-width="1.8" fill="none"/>
<path d="M1468 911 L1475 919 L1468 927" stroke="#cfcfcf" stroke-width="1.8" fill="none"/>
<path d="M1842 579 L1848 585 L1854 579" stroke="#e0e0e0" stroke-width="1.8" fill="none"/>
<path d="M1842 728 L1848 734 L1854 728" stroke="#e0e0e0" stroke-width="1.8" fill="none"/></svg>
</body></html>
